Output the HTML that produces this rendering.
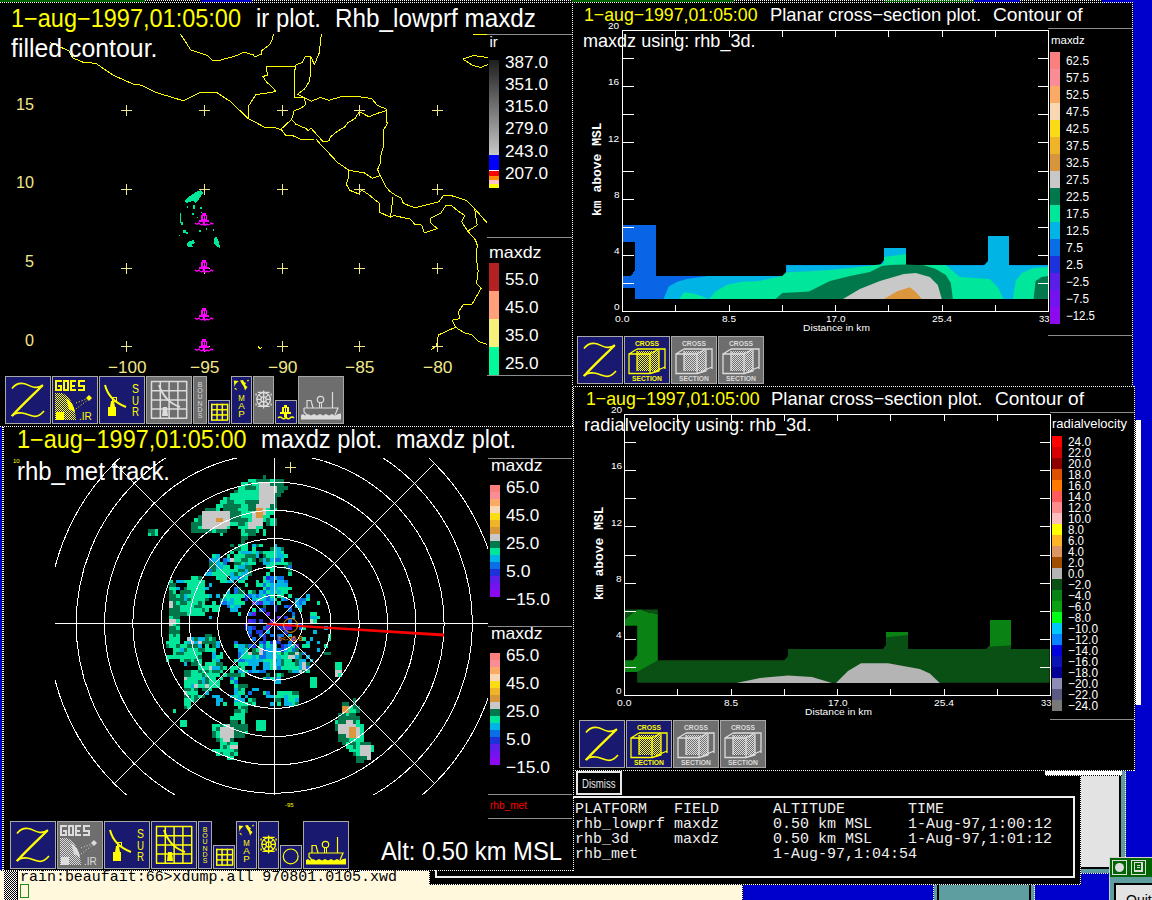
<!DOCTYPE html>
<html><head><meta charset="utf-8"><title>Zeb display</title>
<style>
html,body{margin:0;padding:0}
body{width:1152px;height:900px;overflow:hidden;background:#000;position:relative}
.a{position:absolute}
.t{position:absolute;white-space:pre;line-height:1;transform-origin:0 0}
svg{position:absolute;left:0;top:0;overflow:hidden}
</style></head><body>
<div class="a" style="left:0px;top:0px;width:1152px;height:900px;background:#0000cd;"></div>
<div class="a" style="left:0px;top:870px;width:743px;height:30px;background:#fff8dc;"></div>
<div class="a" style="left:742px;top:885px;width:1px;height:15px;background:repeating-linear-gradient(180deg,#000 0 1px,transparent 1px 2px);"></div>
<div class="a" style="left:4px;top:871px;width:13px;height:29px;background:repeating-conic-gradient(#000 0 25%,#fff 0 50%) 0 0/2px 2px;"></div>
<div class="a" style="left:17px;top:871px;width:1px;height:29px;background:#000;"></div>
<div class="a" style="left:20px;top:884px;width:7px;height:12px;border:1px solid #228b22"></div>
<div class="a" style="left:429px;top:770px;width:652px;height:115px;background:#000;"></div>
<div class="a" style="left:429px;top:870px;width:1px;height:15px;background:repeating-linear-gradient(180deg,#fff 0 1px,transparent 1px 2px);"></div>
<div class="a" style="left:429px;top:884px;width:652px;height:1px;background:repeating-linear-gradient(90deg,#fff 0 1px,transparent 1px 2px);"></div>
<div class="a" style="left:1080px;top:775px;width:1px;height:110px;background:repeating-linear-gradient(180deg,#fff 0 1px,transparent 1px 2px);"></div>
<div class="a" style="left:934px;top:885px;width:101px;height:15px;background:#5f9ea0;"></div>
<div class="a" style="left:933px;top:885px;width:1px;height:15px;background:repeating-linear-gradient(180deg,#fff 0 1px,transparent 1px 2px);"></div>
<div class="a" style="left:937px;top:885px;width:2px;height:15px;background:#000;"></div>
<div class="a" style="left:1029px;top:885px;width:2px;height:15px;background:#000;"></div>
<div class="a" style="left:1034px;top:885px;width:1px;height:15px;background:repeating-linear-gradient(180deg,#fff 0 1px,transparent 1px 2px);"></div>
<div class="a" style="left:1081px;top:775px;width:38px;height:92px;background:#e3e3e3;"></div>
<div class="a" style="left:1119px;top:770px;width:2px;height:99px;background:#000;"></div>
<div class="a" style="left:1081px;top:867px;width:40px;height:2px;background:#000;"></div>
<div class="a" style="left:1121px;top:770px;width:5px;height:103px;background:#5f9ea0;"></div>
<div class="a" style="left:1081px;top:869px;width:45px;height:4px;background:#5f9ea0;"></div>
<div class="a" style="left:1125px;top:770px;width:1px;height:103px;background:repeating-linear-gradient(180deg,#fff 0 1px,transparent 1px 2px);"></div>
<div class="a" style="left:1081px;top:873px;width:45px;height:1px;background:repeating-linear-gradient(90deg,#fff 0 1px,transparent 1px 2px);"></div>
<div class="a" style="left:1045px;top:770px;width:77px;height:6px;background:#fff;"></div>
<div class="a" style="left:1045px;top:775px;width:77px;height:1px;background:repeating-linear-gradient(90deg,#000 0 1px,transparent 1px 2px);"></div>
<div class="a" style="left:1135px;top:420px;width:6px;height:285px;background:#fff;"></div>
<div class="a" style="left:1135px;top:420px;width:1px;height:285px;background:repeating-linear-gradient(180deg,#000 0 1px,transparent 1px 2px);"></div>
<div class="a" style="left:1109px;top:857px;width:43px;height:43px;background:#d0d0d0;"></div>
<div class="a" style="left:1110px;top:858px;width:42px;height:19px;background:#006400;"></div>
<div class="a" style="left:1112px;top:860px;width:13px;height:13px;border:1px solid #ddd"></div>
<div class="a" style="left:1115px;top:863px;width:9px;height:9px;border-radius:50%;background:#ddd"></div>
<div class="a" style="left:1131px;top:860px;width:13px;height:13px;border:1px solid #ddd"></div>
<div class="a" style="left:1134px;top:862px;width:9px;height:10px;background:#ddd;"></div>
<div class="a" style="left:1135px;top:863px;width:6px;height:7px;background:#006400;"></div>
<div class="a" style="left:1137px;top:865px;width:3px;height:1px;background:#ddd;"></div>
<div class="a" style="left:1137px;top:867px;width:3px;height:1px;background:#ddd;"></div>
<div class="a" style="left:1110px;top:877px;width:42px;height:6px;background:#5f9ea0;"></div>
<div class="a" style="left:1110px;top:877px;width:4px;height:23px;background:#5f9ea0;"></div>
<div class="a" style="left:1114px;top:883px;width:38px;height:2px;background:#000;"></div>
<div class="a" style="left:1114px;top:883px;width:2px;height:17px;background:#000;"></div>
<div class="a" style="left:1116px;top:885px;width:36px;height:15px;background:#e3e3e3;"></div>
<div class="t" style="left:1126px;top:893px;font-size:14px;color:#000;font-family:'Liberation Sans';">Quit</div>
<div class="a" style="left:573px;top:386px;width:562px;height:385px;background:#000;"></div>
<div class="a" style="left:572px;top:0px;width:561px;height:387px;background:#000;"></div>
<div class="a" style="left:0px;top:0px;width:573px;height:427px;background:#000;"></div>
<div class="a" style="left:0px;top:426px;width:574px;height:445px;background:#000;"></div>
<div class="a" style="left:0px;top:0px;width:145px;height:2px;background:#006400;"></div>
<div class="a" style="left:145px;top:0px;width:56px;height:1px;background:repeating-linear-gradient(90deg,#fff 0 1px,transparent 1px 2px);"></div>
<div class="a" style="left:201px;top:0px;width:51px;height:2px;background:#0000cd;"></div>
<div class="a" style="left:252px;top:0px;width:320px;height:1px;background:repeating-linear-gradient(90deg,#fff 0 1px,transparent 1px 2px);"></div>
<div class="a" style="left:572px;top:0px;width:162px;height:2px;background:#006400;"></div>
<div class="a" style="left:734px;top:0px;width:150px;height:1px;background:repeating-linear-gradient(90deg,#fff 0 1px,transparent 1px 2px);"></div>
<div class="a" style="left:884px;top:0px;width:90px;height:2px;background:#006400;"></div>
<div class="a" style="left:884px;top:0px;width:90px;height:1px;background:repeating-linear-gradient(90deg,#fff 0 1px,transparent 1px 2px);"></div>
<div class="a" style="left:974px;top:0px;width:46px;height:2px;background:#0000cd;"></div>
<div class="a" style="left:1020px;top:0px;width:82px;height:1px;background:repeating-linear-gradient(90deg,#fff 0 1px,transparent 1px 2px);"></div>
<div class="a" style="left:1102px;top:0px;width:50px;height:3px;background:#0000cd;"></div>
<div class="a" style="left:0px;top:2px;width:1133px;height:1px;background:repeating-linear-gradient(90deg,#fff 0 1px,transparent 1px 2px);"></div>
<div class="a" style="left:572px;top:2px;width:1px;height:384px;background:repeating-linear-gradient(180deg,#fff 0 1px,transparent 1px 2px);"></div>
<div class="a" style="left:1132px;top:2px;width:1px;height:384px;background:repeating-linear-gradient(180deg,#fff 0 1px,transparent 1px 2px);"></div>
<div class="a" style="left:573px;top:386px;width:562px;height:1px;background:repeating-linear-gradient(90deg,#fff 0 1px,transparent 1px 2px);"></div>
<div class="a" style="left:1134px;top:386px;width:1px;height:385px;background:repeating-linear-gradient(180deg,#fff 0 1px,transparent 1px 2px);"></div>
<div class="a" style="left:573px;top:386px;width:1px;height:384px;background:repeating-linear-gradient(180deg,#fff 0 1px,transparent 1px 2px);"></div>
<div class="a" style="left:572px;top:387px;width:1px;height:40px;background:repeating-linear-gradient(180deg,#fff 0 1px,transparent 1px 2px);"></div>
<div class="a" style="left:573px;top:770px;width:562px;height:1px;background:repeating-linear-gradient(90deg,#fff 0 1px,transparent 1px 2px);"></div>
<div class="a" style="left:0px;top:426px;width:574px;height:1px;background:repeating-linear-gradient(90deg,#fff 0 1px,transparent 1px 2px);"></div>
<div class="a" style="left:573px;top:426px;width:1px;height:445px;background:repeating-linear-gradient(180deg,#fff 0 1px,transparent 1px 2px);"></div>
<div class="a" style="left:0px;top:870px;width:574px;height:1px;background:repeating-linear-gradient(90deg,#fff 0 1px,transparent 1px 2px);"></div>
<div class="a" style="left:0px;top:427px;width:2px;height:443px;background:#0000cd;"></div>
<div class="a" style="left:2px;top:427px;width:1px;height:443px;background:repeating-linear-gradient(180deg,#fff 0 1px,transparent 1px 2px);"></div>
<div class="a" style="left:3px;top:427px;width:1px;height:443px;background:repeating-linear-gradient(180deg,#fff 0 1px,transparent 1px 2px);"></div>
<svg width="573" height="426" style="left:0px;top:0px"><defs>
<pattern id="dpffff00" width="2" height="2" patternUnits="userSpaceOnUse"><rect x="0" y="0" width="1" height="1" fill="#ffff00"/><rect x="1" y="1" width="1" height="1" fill="#ffff00"/></pattern>
<pattern id="dpdcdcdc" width="2" height="2" patternUnits="userSpaceOnUse"><rect x="0" y="0" width="1" height="1" fill="#dcdcdc"/><rect x="1" y="1" width="1" height="1" fill="#dcdcdc"/></pattern>
</defs><g fill="none" stroke="#ffff00" stroke-width="1" stroke-linejoin="round" shape-rendering="crispEdges"><polyline points="50.0,42.5 68.8,50.8 72.9,58.1 83.3,62.3 95.8,63.3 112.5,74.8 133.3,84.2 141.7,85.2 156.2,92.5 183.3,100.8 200.0,92.5 216.7,92.5 230.0,101.2 248.2,118.5 264.7,127.3 275.1,127.8 281.2,129.5 285.6,135.3 292.5,135.6 300.3,139.1 316.0,139.0 318.6,142.2 337.6,162.5 348.9,170.3 348.0,179.0 346.3,184.2 349.8,190.3 358.5,193.8 362.0,190.3 368.9,194.7 379.3,203.3 379.3,212.0 390.4,217.3 393.9,215.6 410.4,219.1 414.7,224.3 421.7,225.1 424.3,233.0 437.3,228.6 430.3,222.5 430.3,218.2 440.8,213.0 446.0,205.2 451.2,205.2 458.1,211.2 465.0,215.6 461.6,221.7 467.7,231.2 475.5,239.9 477.2,245.1 476.4,258.1 478.1,270.9 476.6,283.4 481.2,288.1 471.9,304.5 463.3,304.5 458.6,311.6 459.4,318.6 452.3,320.2 455.5,327.2 438.3,335.0 436.7,345.2 431.2,349.8"/><polyline points="180.4,34.0 190.8,50.0 207.5,55.6 212.4,60.4 219.3,60.4 236.7,55.6 244.3,52.1 253.3,54.9 254.7,56.7 261.7,54.2 261.7,50.7 270.0,44.4 272.0,40.3 273.5,34.0"/><polyline points="321.4,34.0 319.3,52.8 314.4,64.6 311.0,57.0 310.5,60.0 309.9,80.3 304.6,89.0 297.7,94.2 304.6,97.7"/><polyline points="311.0,57.0 305.4,56.3 302.0,62.5 296.4,64.6 295.0,66.5"/><polyline points="266.5,66.5 295.1,66.5 294.2,97.7 304.6,97.7"/><polyline points="266.5,66.5 267.3,75.1 263.0,76.5 266.5,82.0 271.7,86.4 276.0,91.6 256.0,94.6 248.2,106.4 248.2,118.5"/><polyline points="304.6,97.7 311.6,101.2 320.3,97.4 329.0,100.3 342.8,96.3 356.7,96.3 371.5,98.6 377.6,105.5 386.2,109.0 387.1,123.8 383.6,129.8 383.6,146.0 381.0,154.7 380.2,163.4 377.6,169.5 380.2,175.6 385.4,186.0 389.7,191.2 397.4,196.5 400.8,197.4 403.4,203.4 414.7,207.8 439.0,201.7 443.4,195.6 451.2,195.6 459.9,198.2 466.8,200.8 474.6,208.6 486.8,222.5"/><polyline points="304.6,97.7 305.5,104.7 301.2,108.1 294.2,110.7 291.6,119.4 280.3,129.8"/><polyline points="291.6,119.4 296.0,124.3 306.4,128.7 308.1,130.8 311.2,128.3 318.5,136.5 322.9,141.7 329.0,140.8 330.7,136.5 337.6,131.3 344.6,126.9 348.0,122.6 355.0,118.5 359.3,111.6 368.9,116.8 377.6,113.3 386.2,110.7"/><polyline points="348.9,170.3 364.5,173.0 372.4,178.2 380.2,175.6"/><polyline points="393.0,197.4 390.4,217.3"/><polyline points="467.7,231.2 477.2,225.1 474.6,208.6"/><polyline points="455.5,327.2 464.1,332.7 471.9,334.7 478.1,341.2 486.7,344.4"/><polyline points="463.0,59.2 473.0,55.5 488.0,57.5"/><polyline points="463.0,59.2 473.0,65.5 480.5,67.5 488.0,64.5"/><polyline points="473.0,34.5 488.0,34.5"/><polyline points="258.0,346.0 260.0,349.0 262.0,347.0"/></g><g stroke="#f0e68c" stroke-width="1" shape-rendering="crispEdges"><line x1="121" y1="110.5" x2="132" y2="110.5"/><line x1="126.5" y1="105" x2="126.5" y2="116"/><line x1="121" y1="189.5" x2="132" y2="189.5"/><line x1="126.5" y1="184" x2="126.5" y2="195"/><line x1="121" y1="268.5" x2="132" y2="268.5"/><line x1="126.5" y1="263" x2="126.5" y2="274"/><line x1="121" y1="346.5" x2="132" y2="346.5"/><line x1="126.5" y1="341" x2="126.5" y2="352"/><line x1="199" y1="110.5" x2="210" y2="110.5"/><line x1="204.5" y1="105" x2="204.5" y2="116"/><line x1="199" y1="189.5" x2="210" y2="189.5"/><line x1="204.5" y1="184" x2="204.5" y2="195"/><line x1="199" y1="268.5" x2="210" y2="268.5"/><line x1="204.5" y1="263" x2="204.5" y2="274"/><line x1="199" y1="346.5" x2="210" y2="346.5"/><line x1="204.5" y1="341" x2="204.5" y2="352"/><line x1="277" y1="110.5" x2="288" y2="110.5"/><line x1="282.5" y1="105" x2="282.5" y2="116"/><line x1="277" y1="189.5" x2="288" y2="189.5"/><line x1="282.5" y1="184" x2="282.5" y2="195"/><line x1="277" y1="268.5" x2="288" y2="268.5"/><line x1="282.5" y1="263" x2="282.5" y2="274"/><line x1="277" y1="346.5" x2="288" y2="346.5"/><line x1="282.5" y1="341" x2="282.5" y2="352"/><line x1="354" y1="110.5" x2="365" y2="110.5"/><line x1="359.5" y1="105" x2="359.5" y2="116"/><line x1="354" y1="189.5" x2="365" y2="189.5"/><line x1="359.5" y1="184" x2="359.5" y2="195"/><line x1="354" y1="268.5" x2="365" y2="268.5"/><line x1="359.5" y1="263" x2="359.5" y2="274"/><line x1="354" y1="346.5" x2="365" y2="346.5"/><line x1="359.5" y1="341" x2="359.5" y2="352"/><line x1="432" y1="110.5" x2="443" y2="110.5"/><line x1="437.5" y1="105" x2="437.5" y2="116"/><line x1="432" y1="189.5" x2="443" y2="189.5"/><line x1="437.5" y1="184" x2="437.5" y2="195"/><line x1="432" y1="268.5" x2="443" y2="268.5"/><line x1="437.5" y1="263" x2="437.5" y2="274"/><line x1="432" y1="346.5" x2="443" y2="346.5"/><line x1="437.5" y1="341" x2="437.5" y2="352"/></g><g fill="#00e69b" shape-rendering="crispEdges"><path d="M184,201 L190,196 L196,192 L201,190 L203,193 L199,199 L195,203 L193,201 L186,203 Z"/><path d="M189,241 L194,240 L195,243 L191,245 L194,247 L188,247 L187,244 Z"/><path d="M214,238 L216,236 L219,242 L220,248 L217,247 L214,243 Z"/><rect x="180" y="213" width="1" height="10"/><rect x="181" y="222" width="2" height="3"/><rect x="187" y="206" width="1" height="2"/><rect x="193" y="205" width="2" height="4"/><rect x="200" y="207" width="2" height="2"/><rect x="192" y="213" width="2" height="2"/><rect x="183" y="230" width="3" height="3"/><rect x="186" y="232" width="2" height="2"/><rect x="199" y="230" width="2" height="2"/><rect x="206" y="228" width="1" height="2"/><rect x="213" y="229" width="1" height="2"/><rect x="179" y="235" width="1" height="1"/><rect x="197" y="217" width="1" height="1"/><rect x="201" y="212" width="1" height="1"/></g><g transform="translate(196,213)" fill="#ff00ff" shape-rendering="crispEdges"><rect x="6" y="0" width="4" height="2"/><rect x="5" y="2" width="6" height="5"/><rect x="7" y="3" width="1" height="3" fill="#000"/><rect x="9" y="3" width="1" height="3" fill="#000"/><rect x="3" y="7" width="10" height="2"/><rect x="7" y="9" width="2" height="3"/></g><path transform="translate(196,213)" d="M-1,10 Q1,12 3,10 Q5,13 7,11 Q9,13 11,11 Q13,13 15,10 Q17,12 17,10" fill="none" stroke="#ff00ff" stroke-width="1.2"/><g transform="translate(196,260)" fill="#ff00ff" shape-rendering="crispEdges"><rect x="6" y="0" width="4" height="2"/><rect x="5" y="2" width="6" height="5"/><rect x="7" y="3" width="1" height="3" fill="#000"/><rect x="9" y="3" width="1" height="3" fill="#000"/><rect x="3" y="7" width="10" height="2"/><rect x="7" y="9" width="2" height="3"/></g><path transform="translate(196,260)" d="M-1,10 Q1,12 3,10 Q5,13 7,11 Q9,13 11,11 Q13,13 15,10 Q17,12 17,10" fill="none" stroke="#ff00ff" stroke-width="1.2"/><g transform="translate(196,308)" fill="#ff00ff" shape-rendering="crispEdges"><rect x="6" y="0" width="4" height="2"/><rect x="5" y="2" width="6" height="5"/><rect x="7" y="3" width="1" height="3" fill="#000"/><rect x="9" y="3" width="1" height="3" fill="#000"/><rect x="3" y="7" width="10" height="2"/><rect x="7" y="9" width="2" height="3"/></g><path transform="translate(196,308)" d="M-1,10 Q1,12 3,10 Q5,13 7,11 Q9,13 11,11 Q13,13 15,10 Q17,12 17,10" fill="none" stroke="#ff00ff" stroke-width="1.2"/><g transform="translate(196,339)" fill="#ff00ff" shape-rendering="crispEdges"><rect x="6" y="0" width="4" height="2"/><rect x="5" y="2" width="6" height="5"/><rect x="7" y="3" width="1" height="3" fill="#000"/><rect x="9" y="3" width="1" height="3" fill="#000"/><rect x="3" y="7" width="10" height="2"/><rect x="7" y="9" width="2" height="3"/></g><path transform="translate(196,339)" d="M-1,10 Q1,12 3,10 Q5,13 7,11 Q9,13 11,11 Q13,13 15,10 Q17,12 17,10" fill="none" stroke="#ff00ff" stroke-width="1.2"/><g shape-rendering="crispEdges"><rect x="487" y="34" width="85" height="1" fill="#8c8c8c"/><linearGradient id="irg" x1="0" y1="0" x2="0" y2="1"><stop offset="0" stop-color="#1e1e1e"/><stop offset="1" stop-color="#c8c8c8"/></linearGradient><rect x="489" y="60" width="10" height="95" fill="url(#irg)"/><rect x="489" y="155" width="10" height="16" fill="#0000ff"/><rect x="489" y="170" width="10" height="1" fill="#ffffff"/><rect x="489" y="171" width="10" height="5" fill="#ff0000"/><rect x="489" y="176" width="10" height="4" fill="#ff8c00"/><rect x="489" y="180" width="10" height="4" fill="#ffc0cb"/><rect x="489" y="184" width="10" height="4" fill="#ffff00"/><rect x="487" y="237" width="85" height="1" fill="#8c8c8c"/><rect x="489" y="263" width="10" height="28" fill="#b22222"/><rect x="489" y="291" width="10" height="28" fill="#ffa07a"/><rect x="489" y="319" width="10" height="28" fill="#f5f07a"/><rect x="489" y="347" width="10" height="28" fill="#00fa9a"/><rect x="487" y="375" width="85" height="1" fill="#8c8c8c"/></g><rect x="5.5" y="376.5" width="45" height="47" fill="#191970" stroke="#a8a8a8" stroke-width="1"/><g transform="translate(5,376)" fill="none" stroke="#ffff00"><path d="M7,12.5 C10,8.5 14,7 18,7.5 C22,8 25,10.5 29,11.2 C33,12 36,10.5 38,9" stroke-width="1.6"/><path d="M37.5,9.5 C30,17 18,28 7,40" stroke-width="2.3"/><path d="M6.5,40 C9,37.5 13,36.5 17,37 C21,37.5 25,39.5 29,40.2 C33,41 36,38.5 39,35" stroke-width="1.6"/></g><rect x="52.5" y="376.5" width="45" height="47" fill="#191970" stroke="#a8a8a8" stroke-width="1"/><g transform="translate(52,376)" fill="none" stroke="#ffff00"><g fill="#ffff00" stroke="none" shape-rendering="crispEdges"><rect x="3" y="4" width="7" height="2"/><rect x="3" y="4" width="2" height="11"/><rect x="3" y="13" width="7" height="2"/><rect x="8" y="9" width="2" height="6"/><rect x="6" y="9" width="4" height="2"/><rect x="11" y="4" width="6" height="2"/><rect x="11" y="4" width="2" height="11"/><rect x="11" y="13" width="6" height="2"/><rect x="15" y="4" width="2" height="11"/><rect x="18" y="4" width="6" height="2"/><rect x="18" y="4" width="2" height="11"/><rect x="18" y="8.5" width="5" height="2"/><rect x="18" y="13" width="6" height="2"/><rect x="26" y="4" width="7" height="2"/><rect x="26" y="4" width="2" height="6"/><rect x="26" y="8.5" width="7" height="2"/><rect x="31" y="8.5" width="2" height="6.5"/><rect x="26" y="13" width="7" height="2"/></g><path d="M3,17 L10,17 C18,20 23,30 24,44 L3,44 Z" fill="url(#dpffff00)" stroke="none"/><path d="M14,22 C19,25 22,30 23,36 L17,33 Z" fill="#ffff00" stroke="none"/><rect x="4" y="36" width="8" height="8" fill="#ffff00" stroke="none"/><path d="M24,27 L37,22 M24,33 L37,23" stroke-width="1" stroke-dasharray="1 2"/><path d="M37,19 L40,22 L37,25 L34,22 Z" fill="#ffff00" stroke="none"/><text x="27" y="44" font-family="Liberation Sans" font-size="10" fill="#ffff00" stroke="none">.IR</text></g><rect x="99.5" y="376.5" width="45" height="47" fill="#191970" stroke="#a8a8a8" stroke-width="1"/><g transform="translate(99,376)" fill="none" stroke="#ffff00"><path d="M6,9 C8,17 14,26 27,31" stroke-width="2"/><rect x="13.5" y="21.5" width="4" height="4" stroke-width="1"/><path d="M12,25 L15,25 L16,31 L11,31 Z" fill="#ffff00" stroke="none"/><rect x="9" y="31" width="8" height="9" fill="#ffff00" stroke="none"/><text x="33" y="17" font-family="Liberation Sans" font-size="13" fill="#ffff00" stroke="none" textLength="7" lengthAdjust="spacingAndGlyphs">S</text><text x="33" y="28.5" font-family="Liberation Sans" font-size="13" fill="#ffff00" stroke="none" textLength="7" lengthAdjust="spacingAndGlyphs">U</text><text x="33" y="40" font-family="Liberation Sans" font-size="13" fill="#ffff00" stroke="none" textLength="7" lengthAdjust="spacingAndGlyphs">R</text></g><rect x="146.5" y="376.5" width="45" height="47" fill="#6e6e6e" stroke="#a8a8a8" stroke-width="1"/><g transform="translate(146,376)" fill="none" stroke="#dcdcdc"><g stroke-width="1.5"><line x1="5.5" y1="5" x2="5.5" y2="42.5"/><line x1="5" y1="5.5" x2="41" y2="5.5"/><line x1="14.3" y1="5" x2="14.3" y2="42.5"/><line x1="5" y1="14.7" x2="41" y2="14.7"/><line x1="23.1" y1="5" x2="23.1" y2="42.5"/><line x1="5" y1="23.9" x2="41" y2="23.9"/><line x1="31.900000000000002" y1="5" x2="31.900000000000002" y2="42.5"/><line x1="5" y1="33.099999999999994" x2="41" y2="33.099999999999994"/><line x1="40.7" y1="5" x2="40.7" y2="42.5"/><line x1="5" y1="42.3" x2="41" y2="42.3"/></g><path d="M13,9 C16,18 22,27 34,31" stroke-width="2"/><path d="M17,31 L21,31 L22,40 L16,40 Z" fill="#dcdcdc" stroke="none"/></g><rect x="193.5" y="376.5" width="13" height="47" fill="#6e6e6e" stroke="#a8a8a8" stroke-width="1"/><g transform="translate(193,376)" fill="none" stroke="#dcdcdc"><text x="7.0" y="11.0" text-anchor="middle" font-family="Liberation Sans" font-size="7" fill="#dcdcdc" stroke="none">B</text><text x="7.0" y="17.2" text-anchor="middle" font-family="Liberation Sans" font-size="7" fill="#dcdcdc" stroke="none">O</text><text x="7.0" y="23.4" text-anchor="middle" font-family="Liberation Sans" font-size="7" fill="#dcdcdc" stroke="none">U</text><text x="7.0" y="29.6" text-anchor="middle" font-family="Liberation Sans" font-size="7" fill="#dcdcdc" stroke="none">N</text><text x="7.0" y="35.8" text-anchor="middle" font-family="Liberation Sans" font-size="7" fill="#dcdcdc" stroke="none">D</text><text x="7.0" y="42.0" text-anchor="middle" font-family="Liberation Sans" font-size="7" fill="#dcdcdc" stroke="none">S</text></g><rect x="208.5" y="400.5" width="21" height="23" fill="#191970" stroke="#a8a8a8" stroke-width="1"/><g transform="translate(208,400)" fill="none" stroke="#ffff00"><g stroke-width="1.5"><line x1="3.75" y1="3.75" x2="3.75" y2="20.25"/><line x1="3" y1="4.5" x2="20" y2="4.5"/><line x1="9.05" y1="3.75" x2="9.05" y2="20.25"/><line x1="3" y1="9.7" x2="20" y2="9.7"/><line x1="14.35" y1="3.75" x2="14.35" y2="20.25"/><line x1="3" y1="14.9" x2="20" y2="14.9"/><line x1="19.65" y1="3.75" x2="19.65" y2="20.25"/><line x1="3" y1="20.1" x2="20" y2="20.1"/></g></g><rect x="231.5" y="376.5" width="20" height="47" fill="#191970" stroke="#a8a8a8" stroke-width="1"/><g transform="translate(231,376)" fill="none" stroke="#ffff00"><path d="M2.8,4.5 L7.7,5 L4.5,8 L3.5,11 Z M9,4.5 L12,4 L13,6 L15,7 L14,9 L16.5,11 L15,13 L14,14.6 L13,11 L11,8 Z M16,4 L18,3.8 L17,6 Z M3,12.5 L5,12 L6,14.5 Z" fill="#ffff00" stroke="none"/><text x="10.5" y="25" text-anchor="middle" font-family="Liberation Sans" font-size="9.5" fill="#ffff00" stroke="none" textLength="6.5" lengthAdjust="spacingAndGlyphs">M</text><text x="10.5" y="33" text-anchor="middle" font-family="Liberation Sans" font-size="9.5" fill="#ffff00" stroke="none" textLength="6.5" lengthAdjust="spacingAndGlyphs">A</text><text x="10.5" y="41" text-anchor="middle" font-family="Liberation Sans" font-size="9.5" fill="#ffff00" stroke="none" textLength="6.5" lengthAdjust="spacingAndGlyphs">P</text></g><rect x="253.5" y="376.5" width="20" height="47" fill="#6e6e6e" stroke="#a8a8a8" stroke-width="1"/><g transform="translate(253,376)" fill="none" stroke="#dcdcdc"><circle cx="10.6" cy="23.4" r="6.8" stroke-width="1.3"/><circle cx="10.6" cy="23.4" r="2.6" stroke-width="1.3"/><path d="M13.20,23.40 L17.40,23.40 M12.44,25.24 L15.41,28.21 M10.60,26.00 L10.60,30.20 M8.76,25.24 L5.79,28.21 M8.00,23.40 L3.80,23.40 M8.76,21.56 L5.79,18.59 M10.60,20.80 L10.60,16.60 M12.44,21.56 L15.41,18.59" stroke-width="1.2"/><path d="M10.6,14.399999999999999 L10.6,32.4 M4.6,16.4 L16.6,16.4 M4.6,30.4 L16.6,30.4 M3.0999999999999996,17.4 L3.0999999999999996,19.4 M18.1,17.4 L18.1,19.4 M3.0999999999999996,27.4 L3.0999999999999996,29.4 M18.1,27.4 L18.1,29.4" stroke-width="1.3"/></g><rect x="275.5" y="400.5" width="21" height="23" fill="#191970" stroke="#a8a8a8" stroke-width="1"/><g transform="translate(275,400)" fill="none" stroke="#ffff00"><path d="M9,5 L12,5 L12,7 L14,7 L14,12 L16,12 L16,14 L5,14 L5,12 L7,12 L7,7 L9,7 Z" fill="#ffff00" stroke="none"/><path d="M9.5,8 L9.5,12 M11.5,8 L11.5,12" stroke="#191970" stroke-width="1"/><path d="M3,18 Q5,16 7,18 Q9,20 11,17 Q13,20 15,18 Q17,16 19,18" stroke-width="1.5"/><rect x="9" y="14" width="3" height="3" fill="#ffff00" stroke="none"/></g><rect x="298.5" y="376.5" width="45" height="47" fill="#6e6e6e" stroke="#a8a8a8" stroke-width="1"/><g transform="translate(298,376)" fill="none" stroke="#dcdcdc"><path d="M6,32 L40,32 L37,39 M6,32 L6,36 L9,39" stroke-width="1.2"/><path d="M9,32 L9,24.5 L13,24.5 L15,32" stroke-width="1.2"/><circle cx="22.5" cy="23.5" r="3.2" stroke-width="1.2"/><path d="M21.5,27 L21.5,32 M23.5,27 L23.5,32" stroke-width="1"/><path d="M34.5,16 L34.5,32" stroke-width="1.2"/><path d="M3,39 L5,38 L7,39.5 L10,38 L13,39.5 L16,38 L19,39.5 L22,38 L25,39.5 L28,38 L31,39.5 L34,38 L37,39.5 L40,38 L43,37.5 L43,43.5 L3,43.5 Z" fill="#dcdcdc" stroke="none"/></g></svg>
<div class="t" style="left:11px;top:6px;font-size:25px;color:#ffff00;font-family:'Liberation Sans';transform:scaleX(0.9399);">1−aug−1997,01:05:00</div>
<div class="t" style="left:255.5px;top:6px;font-size:25px;color:#fff;font-family:'Liberation Sans';transform:scaleX(0.9546);">ir plot.</div>
<div class="t" style="left:335px;top:6px;font-size:25px;color:#fff;font-family:'Liberation Sans';transform:scaleX(0.9709);">Rhb_lowprf maxdz</div>
<div class="t" style="left:11px;top:36px;font-size:25px;color:#fff;font-family:'Liberation Sans';transform:scaleX(0.9944);">filled contour.</div>
<div class="t" style="left:489.5px;top:33.5px;font-size:15px;color:#fff;font-family:'Liberation Sans';">ir</div>
<div class="t" style="left:505px;top:53.5px;font-size:16.5px;color:#fff;font-family:'Liberation Sans';transform:scaleX(1.0412);">387.0</div>
<div class="t" style="left:505px;top:75.8px;font-size:16.5px;color:#fff;font-family:'Liberation Sans';transform:scaleX(1.0412);">351.0</div>
<div class="t" style="left:505px;top:98.1px;font-size:16.5px;color:#fff;font-family:'Liberation Sans';transform:scaleX(1.0412);">315.0</div>
<div class="t" style="left:505px;top:120.4px;font-size:16.5px;color:#fff;font-family:'Liberation Sans';transform:scaleX(1.0412);">279.0</div>
<div class="t" style="left:505px;top:142.7px;font-size:16.5px;color:#fff;font-family:'Liberation Sans';transform:scaleX(1.0412);">243.0</div>
<div class="t" style="left:505px;top:165.0px;font-size:16.5px;color:#fff;font-family:'Liberation Sans';transform:scaleX(1.0412);">207.0</div>
<div class="t" style="left:489px;top:243.5px;font-size:17px;color:#fff;font-family:'Liberation Sans';transform:scaleX(1.0484);">maxdz</div>
<div class="t" style="left:504.5px;top:270.5px;font-size:17px;color:#fff;font-family:'Liberation Sans';transform:scaleX(1.0123);">55.0</div>
<div class="t" style="left:504.5px;top:298.5px;font-size:17px;color:#fff;font-family:'Liberation Sans';transform:scaleX(1.0123);">45.0</div>
<div class="t" style="left:504.5px;top:326.5px;font-size:17px;color:#fff;font-family:'Liberation Sans';transform:scaleX(1.0123);">35.0</div>
<div class="t" style="left:504.5px;top:354.5px;font-size:17px;color:#fff;font-family:'Liberation Sans';transform:scaleX(1.0123);">25.0</div>
<div class="t" style="left:15.5px;top:95.6px;font-size:17px;color:#f0e68c;font-family:'Liberation Sans';transform:scaleX(0.9513);">15</div>
<div class="t" style="left:15.5px;top:174.4px;font-size:17px;color:#f0e68c;font-family:'Liberation Sans';transform:scaleX(0.9513);">10</div>
<div class="t" style="left:24.5px;top:252.60000000000002px;font-size:17px;color:#f0e68c;font-family:'Liberation Sans';transform:scaleX(0.9505);">5</div>
<div class="t" style="left:24.5px;top:331.6px;font-size:17px;color:#f0e68c;font-family:'Liberation Sans';transform:scaleX(0.9505);">0</div>
<div class="t" style="left:107.5px;top:358.5px;font-size:17px;color:#f0e68c;font-family:'Liberation Sans';transform:scaleX(1.0053);">−100</div>
<div class="t" style="left:190px;top:358.5px;font-size:17px;color:#f0e68c;font-family:'Liberation Sans';transform:scaleX(1.0228);">−95</div>
<div class="t" style="left:267.5px;top:358.5px;font-size:17px;color:#f0e68c;font-family:'Liberation Sans';transform:scaleX(1.0228);">−90</div>
<div class="t" style="left:345px;top:358.5px;font-size:17px;color:#f0e68c;font-family:'Liberation Sans';transform:scaleX(1.0228);">−85</div>
<div class="t" style="left:423px;top:358.5px;font-size:17px;color:#f0e68c;font-family:'Liberation Sans';transform:scaleX(1.0228);">−80</div>
<svg width="559" height="383" viewBox="573 3 559 383" style="left:573px;top:3px"><g shape-rendering="crispEdges"><path fill="#0a64e6" d="M623,225 L656,225 L656,276 L782.3,276 L786.2,272 L786.2,265.2 L1048,265.2 L1048,299 L635,299 L635,288 L623,288 L623,276 L631,276 L635,270 L635,241.7 L623,241.7 Z"/></g><polygon fill="#00b4e6" points="663.5,299.0 668.7,286.6 677.3,281.8 686.8,279.0 707.9,276.1 782.3,276.1 786.2,272.3 786.2,265.2 880.0,265.2 884.0,260.0 884.0,248.0 906.0,248.0 906.0,265.2 984.0,265.2 988.0,261.0 988.0,236.0 1009.0,236.0 1009.0,265.2 1048.0,265.2 1048.0,299.0"/><polygon fill="#00e69b" points="679.2,299.0 684.0,292.3 692.6,293.3 702.1,296.2 707.9,299.0"/><polygon fill="#00e69b" points="708.8,299.0 715.5,291.4 727.0,284.7 742.2,281.8 759.4,280.9 782.3,276.1 786.2,272.3 811.0,271.3 830.0,269.9 850.0,268.0 866.0,266.0 884.0,264.0 884.0,257.0 906.0,254.0 906.0,265.0 945.8,264.9 959.8,276.9 989.7,278.9 997.7,286.9 1003.7,299.0"/><polygon fill="#00e69b" points="1012.7,299.0 1015.7,280.9 1021.7,272.9 1033.6,267.9 1048.0,266.9 1048.0,299.0"/><polygon fill="#00784b" points="775.6,299.0 782.3,292.9 809.1,291.4 822.4,284.7 830.0,280.9 850.0,275.9 869.9,271.9 881.9,265.9 889.9,264.9 905.9,264.5 923.8,265.3 935.8,268.9 945.8,274.9 950.8,282.9 952.8,299.0"/><polygon fill="#c8c8c8" points="843.0,299.0 859.9,288.9 879.9,280.9 903.9,273.9 915.8,272.9 929.8,276.9 937.8,284.9 941.8,299.0"/><polygon fill="#dc963c" points="883.9,299.0 897.9,290.9 909.9,287.3 915.8,291.9 921.8,299.0"/><polygon fill="#00784b" points="1033.6,299.0 1035.6,280.9 1041.6,276.9 1048.0,275.9 1048.0,299.0"/><g stroke="#fff" stroke-width="1" fill="none" shape-rendering="crispEdges"><path d="M622.5,30.5 L1048.5,30.5 L1048.5,311.5 L622.5,311.5 Z"/><line x1="675.5" y1="30.5" x2="675.5" y2="36.5"/><line x1="675.5" y1="311.5" x2="675.5" y2="304.5"/><line x1="729.5" y1="30.5" x2="729.5" y2="36.5"/><line x1="729.5" y1="311.5" x2="729.5" y2="304.5"/><line x1="782.5" y1="30.5" x2="782.5" y2="36.5"/><line x1="782.5" y1="311.5" x2="782.5" y2="304.5"/><line x1="835.5" y1="30.5" x2="835.5" y2="36.5"/><line x1="835.5" y1="311.5" x2="835.5" y2="304.5"/><line x1="888.5" y1="30.5" x2="888.5" y2="36.5"/><line x1="888.5" y1="311.5" x2="888.5" y2="304.5"/><line x1="942.5" y1="30.5" x2="942.5" y2="36.5"/><line x1="942.5" y1="311.5" x2="942.5" y2="304.5"/><line x1="995.5" y1="30.5" x2="995.5" y2="36.5"/><line x1="995.5" y1="311.5" x2="995.5" y2="304.5"/><line x1="622.5" y1="283.5" x2="633.5" y2="283.5"/><line x1="1048.5" y1="283.5" x2="1037.5" y2="283.5"/><line x1="622.5" y1="255.5" x2="633.5" y2="255.5"/><line x1="1048.5" y1="255.5" x2="1037.5" y2="255.5"/><line x1="622.5" y1="227.5" x2="633.5" y2="227.5"/><line x1="1048.5" y1="227.5" x2="1037.5" y2="227.5"/><line x1="622.5" y1="199.5" x2="633.5" y2="199.5"/><line x1="1048.5" y1="199.5" x2="1037.5" y2="199.5"/><line x1="622.5" y1="171.5" x2="633.5" y2="171.5"/><line x1="1048.5" y1="171.5" x2="1037.5" y2="171.5"/><line x1="622.5" y1="142.5" x2="633.5" y2="142.5"/><line x1="1048.5" y1="142.5" x2="1037.5" y2="142.5"/><line x1="622.5" y1="114.5" x2="633.5" y2="114.5"/><line x1="1048.5" y1="114.5" x2="1037.5" y2="114.5"/><line x1="622.5" y1="86.5" x2="633.5" y2="86.5"/><line x1="1048.5" y1="86.5" x2="1037.5" y2="86.5"/><line x1="622.5" y1="58.5" x2="633.5" y2="58.5"/><line x1="1048.5" y1="58.5" x2="1037.5" y2="58.5"/></g><g shape-rendering="crispEdges"><rect x="1048" y="28" width="84" height="1" fill="#8c8c8c"/><rect x="1048" y="335" width="84" height="1" fill="#8c8c8c"/><rect x="1050" y="52" width="10" height="17" fill="#fa8080"/><rect x="1050" y="69" width="10" height="17" fill="#fa8c96"/><rect x="1050" y="86" width="10" height="17" fill="#faaa64"/><rect x="1050" y="103" width="10" height="17" fill="#fad7b4"/><rect x="1050" y="120" width="10" height="17" fill="#fadc14"/><rect x="1050" y="137" width="10" height="17" fill="#f0b428"/><rect x="1050" y="154" width="10" height="17" fill="#d7963c"/><rect x="1050" y="171" width="10" height="17" fill="#c8c8c8"/><rect x="1050" y="188" width="10" height="17" fill="#00784b"/><rect x="1050" y="205" width="10" height="17" fill="#00e69b"/><rect x="1050" y="222" width="10" height="17" fill="#00b4e6"/><rect x="1050" y="239" width="10" height="17" fill="#0a6ee6"/><rect x="1050" y="256" width="10" height="17" fill="#1e32dc"/><rect x="1050" y="273" width="10" height="17" fill="#5a1ee6"/><rect x="1050" y="290" width="10" height="17" fill="#7314f0"/><rect x="1050" y="307" width="10" height="17" fill="#8c0af0"/></g><rect x="577.5" y="336.5" width="45" height="47" fill="#191970" stroke="#a8a8a8" stroke-width="1"/><g transform="translate(577,336)" fill="none" stroke="#ffff00"><path d="M7,12.5 C10,8.5 14,7 18,7.5 C22,8 25,10.5 29,11.2 C33,12 36,10.5 38,9" stroke-width="1.6"/><path d="M37.5,9.5 C30,17 18,28 7,40" stroke-width="2.3"/><path d="M6.5,40 C9,37.5 13,36.5 17,37 C21,37.5 25,39.5 29,40.2 C33,41 36,38.5 39,35" stroke-width="1.6"/></g><rect x="624.5" y="336.5" width="45" height="47" fill="#191970" stroke="#a8a8a8" stroke-width="1"/><g transform="translate(624,336)" fill="none" stroke="#ffff00"><text x="23" y="9.5" text-anchor="middle" font-family="Liberation Sans" font-weight="700" font-size="7" fill="#ffff00" stroke="none" textLength="24" lengthAdjust="spacingAndGlyphs">CROSS</text><text x="23" y="44.5" text-anchor="middle" font-family="Liberation Sans" font-weight="700" font-size="7" fill="#ffff00" stroke="none" textLength="30" lengthAdjust="spacingAndGlyphs">SECTION</text><rect x="13" y="15" width="22" height="20" fill="url(#dpffff00)" stroke="none"/><path d="M5,18 L26,18 L26,37.5 L5,37.5 Z M13,13 L41,13 L41,33 M5,18 L13,13 M26,18 L35,13 M26,37.5 L41,31 M35,14 L35,35 L26,37.5 M13,15 L13,35" stroke-width="1.3"/></g><rect x="671.5" y="336.5" width="45" height="47" fill="#6e6e6e" stroke="#a8a8a8" stroke-width="1"/><g transform="translate(671,336)" fill="none" stroke="#dcdcdc"><text x="23" y="9.5" text-anchor="middle" font-family="Liberation Sans" font-weight="700" font-size="7" fill="#dcdcdc" stroke="none" textLength="24" lengthAdjust="spacingAndGlyphs">CROSS</text><text x="23" y="44.5" text-anchor="middle" font-family="Liberation Sans" font-weight="700" font-size="7" fill="#dcdcdc" stroke="none" textLength="30" lengthAdjust="spacingAndGlyphs">SECTION</text><rect x="13" y="15" width="22" height="20" fill="url(#dpdcdcdc)" stroke="none"/><path d="M5,18 L26,18 L26,37.5 L5,37.5 Z M13,13 L41,13 L41,33 M5,18 L13,13 M26,18 L35,13 M26,37.5 L41,31 M35,14 L35,35 L26,37.5 M13,15 L13,35" stroke-width="1.3"/></g><rect x="718.5" y="336.5" width="45" height="47" fill="#6e6e6e" stroke="#a8a8a8" stroke-width="1"/><g transform="translate(718,336)" fill="none" stroke="#dcdcdc"><text x="23" y="9.5" text-anchor="middle" font-family="Liberation Sans" font-weight="700" font-size="7" fill="#dcdcdc" stroke="none" textLength="24" lengthAdjust="spacingAndGlyphs">CROSS</text><text x="23" y="44.5" text-anchor="middle" font-family="Liberation Sans" font-weight="700" font-size="7" fill="#dcdcdc" stroke="none" textLength="30" lengthAdjust="spacingAndGlyphs">SECTION</text><rect x="13" y="15" width="22" height="20" fill="url(#dpdcdcdc)" stroke="none"/><path d="M5,18 L26,18 L26,37.5 L5,37.5 Z M13,13 L41,13 L41,33 M5,18 L13,13 M26,18 L35,13 M26,37.5 L41,31 M35,14 L35,35 L26,37.5 M13,15 L13,35" stroke-width="1.3"/></g></svg>
<div class="t" style="left:584px;top:5.5px;font-size:18.5px;color:#ffff00;font-family:'Liberation Sans';transform:scaleX(0.9581);">1−aug−1997,01:05:00</div>
<div class="t" style="left:769.7px;top:5.5px;font-size:18.5px;color:#fff;font-family:'Liberation Sans';transform:scaleX(0.9937);">Planar cross−section plot.</div>
<div class="t" style="left:992.5px;top:5.5px;font-size:18.5px;color:#fff;font-family:'Liberation Sans';transform:scaleX(1.0383);">Contour of</div>
<div class="t" style="left:582.5px;top:32px;font-size:18.5px;color:#fff;font-family:'Liberation Sans';transform:scaleX(0.9752);">maxdz using: rhb_3d.</div>
<div class="t" style="left:1050.7px;top:34.9px;font-size:11.5px;color:#fff;font-family:'Liberation Sans';transform:scaleX(0.9948);">maxdz</div>
<div class="t" style="left:1065.5px;top:55px;font-size:12px;color:#fff;font-family:'Liberation Sans';transform:scaleX(0.9846);">62.5</div>
<div class="t" style="left:1065.5px;top:72px;font-size:12px;color:#fff;font-family:'Liberation Sans';transform:scaleX(0.9846);">57.5</div>
<div class="t" style="left:1065.5px;top:89px;font-size:12px;color:#fff;font-family:'Liberation Sans';transform:scaleX(0.9846);">52.5</div>
<div class="t" style="left:1065.5px;top:106px;font-size:12px;color:#fff;font-family:'Liberation Sans';transform:scaleX(0.9846);">47.5</div>
<div class="t" style="left:1065.5px;top:123px;font-size:12px;color:#fff;font-family:'Liberation Sans';transform:scaleX(0.9846);">42.5</div>
<div class="t" style="left:1065.5px;top:140px;font-size:12px;color:#fff;font-family:'Liberation Sans';transform:scaleX(0.9846);">37.5</div>
<div class="t" style="left:1065.5px;top:157px;font-size:12px;color:#fff;font-family:'Liberation Sans';transform:scaleX(0.9846);">32.5</div>
<div class="t" style="left:1065.5px;top:174px;font-size:12px;color:#fff;font-family:'Liberation Sans';transform:scaleX(0.9846);">27.5</div>
<div class="t" style="left:1065.5px;top:191px;font-size:12px;color:#fff;font-family:'Liberation Sans';transform:scaleX(0.9846);">22.5</div>
<div class="t" style="left:1065.5px;top:208px;font-size:12px;color:#fff;font-family:'Liberation Sans';transform:scaleX(0.9846);">17.5</div>
<div class="t" style="left:1065.5px;top:225px;font-size:12px;color:#fff;font-family:'Liberation Sans';transform:scaleX(0.9846);">12.5</div>
<div class="t" style="left:1065.5px;top:242px;font-size:12px;color:#fff;font-family:'Liberation Sans';transform:scaleX(1.0187);">7.5</div>
<div class="t" style="left:1065.5px;top:259px;font-size:12px;color:#fff;font-family:'Liberation Sans';transform:scaleX(1.0187);">2.5</div>
<div class="t" style="left:1065.5px;top:276px;font-size:12px;color:#fff;font-family:'Liberation Sans';transform:scaleX(0.9703);">−2.5</div>
<div class="t" style="left:1065.5px;top:293px;font-size:12px;color:#fff;font-family:'Liberation Sans';transform:scaleX(0.9703);">−7.5</div>
<div class="t" style="left:1065.5px;top:310px;font-size:12px;color:#fff;font-family:'Liberation Sans';transform:scaleX(0.9547);">−12.5</div>
<div class="t" style="left:608.3px;top:21.2px;font-size:9.5px;color:#fff;font-family:'Liberation Sans';transform:scaleX(1.0588);">20</div>
<div class="t" style="left:608.3px;top:77.4px;font-size:9.5px;color:#fff;font-family:'Liberation Sans';transform:scaleX(1.0588);">16</div>
<div class="t" style="left:608.3px;top:133.6px;font-size:9.5px;color:#fff;font-family:'Liberation Sans';transform:scaleX(1.0588);">12</div>
<div class="t" style="left:613.9px;top:189.8px;font-size:9.5px;color:#fff;font-family:'Liberation Sans';transform:scaleX(1.0572);">8</div>
<div class="t" style="left:613.9px;top:246.0px;font-size:9.5px;color:#fff;font-family:'Liberation Sans';transform:scaleX(1.0572);">4</div>
<div class="t" style="left:613.9px;top:302.2px;font-size:9.5px;color:#fff;font-family:'Liberation Sans';transform:scaleX(1.0572);">0</div>
<div class="t" style="left:614.5px;top:314px;font-size:9.5px;color:#fff;font-family:'Liberation Sans';transform:scaleX(1.0969);">0.0</div>
<div class="t" style="left:721.6px;top:314px;font-size:9.5px;color:#fff;font-family:'Liberation Sans';transform:scaleX(1.0591);">8.5</div>
<div class="t" style="left:825.55px;top:314px;font-size:9.5px;color:#fff;font-family:'Liberation Sans';transform:scaleX(1.0541);">17.0</div>
<div class="t" style="left:932.0px;top:314px;font-size:9.5px;color:#fff;font-family:'Liberation Sans';transform:scaleX(1.0811);">25.4</div>
<div class="t" style="left:1038.75px;top:314px;font-size:9.5px;color:#fff;font-family:'Liberation Sans';transform:scaleX(0.9926);">33</div>
<div class="t" style="left:802.5px;top:324px;font-size:9px;color:#fff;font-family:'Liberation Sans';transform:scaleX(1.1350);">Distance in km</div>
<div class="t" style="left:591px;top:216px;font-family:'Liberation Mono';font-weight:700;font-size:13px;color:#fff;transform:rotate(-90deg);transform-origin:0 0;width:95px;height:14px;line-height:14px">km above MSL</div>
<svg width="560" height="383" viewBox="574 387 560 383" style="left:574px;top:387px"><polygon fill="#0a5014" points="637.2,660.2 784.2,660.2 788.0,656.0 788.0,649.1 883.0,649.0 886.0,645.0 886.0,632.0 908.0,632.0 908.0,649.0 986.0,649.0 990.0,645.0 990.0,620.0 1011.0,620.0 1011.0,649.0 1049.6,649.0 1049.6,682.8 637.2,682.8"/><polygon fill="#0a8214" points="625.0,619.0 637.0,609.5 641.0,609.5 648.6,612.4 657.8,613.8 657.8,660.2 637.2,672.0 625.0,672.0 625.0,660.2 633.0,660.2 637.2,655.0 637.2,625.8 625.0,625.8"/><polygon fill="#0a5014" points="625.0,609.5 637.0,609.5 625.0,619.0"/><polygon fill="#0a5014" points="641.0,609.5 657.8,609.5 657.8,613.8 648.6,612.4"/><polygon fill="#0a8214" points="886.0,632.0 908.0,632.0 908.0,635.0 886.0,637.3"/><polygon fill="#0a8214" points="990.0,620.0 1011.0,620.0 1011.0,645.5 990.0,646.5"/><polygon fill="#b4b4b4" points="736.5,683.0 760.0,678.0 788.0,675.4 812.0,677.0 832.0,683.0"/><polygon fill="#b4b4b4" points="836.0,683.0 848.0,671.0 861.0,663.3 888.0,663.3 919.8,669.0 929.8,673.5 939.8,683.0"/><g stroke="#fff" stroke-width="1" fill="none" shape-rendering="crispEdges"><path d="M624.5,414.5 L1050.5,414.5 L1050.5,695.5 L624.5,695.5 Z"/><line x1="677.5" y1="414.5" x2="677.5" y2="420.5"/><line x1="677.5" y1="695.5" x2="677.5" y2="688.5"/><line x1="731.5" y1="414.5" x2="731.5" y2="420.5"/><line x1="731.5" y1="695.5" x2="731.5" y2="688.5"/><line x1="784.5" y1="414.5" x2="784.5" y2="420.5"/><line x1="784.5" y1="695.5" x2="784.5" y2="688.5"/><line x1="837.5" y1="414.5" x2="837.5" y2="420.5"/><line x1="837.5" y1="695.5" x2="837.5" y2="688.5"/><line x1="890.5" y1="414.5" x2="890.5" y2="420.5"/><line x1="890.5" y1="695.5" x2="890.5" y2="688.5"/><line x1="944.5" y1="414.5" x2="944.5" y2="420.5"/><line x1="944.5" y1="695.5" x2="944.5" y2="688.5"/><line x1="997.5" y1="414.5" x2="997.5" y2="420.5"/><line x1="997.5" y1="695.5" x2="997.5" y2="688.5"/><line x1="624.5" y1="667.5" x2="635.5" y2="667.5"/><line x1="1050.5" y1="667.5" x2="1039.5" y2="667.5"/><line x1="624.5" y1="639.5" x2="635.5" y2="639.5"/><line x1="1050.5" y1="639.5" x2="1039.5" y2="639.5"/><line x1="624.5" y1="611.5" x2="635.5" y2="611.5"/><line x1="1050.5" y1="611.5" x2="1039.5" y2="611.5"/><line x1="624.5" y1="583.5" x2="635.5" y2="583.5"/><line x1="1050.5" y1="583.5" x2="1039.5" y2="583.5"/><line x1="624.5" y1="555.5" x2="635.5" y2="555.5"/><line x1="1050.5" y1="555.5" x2="1039.5" y2="555.5"/><line x1="624.5" y1="526.5" x2="635.5" y2="526.5"/><line x1="1050.5" y1="526.5" x2="1039.5" y2="526.5"/><line x1="624.5" y1="498.5" x2="635.5" y2="498.5"/><line x1="1050.5" y1="498.5" x2="1039.5" y2="498.5"/><line x1="624.5" y1="470.5" x2="635.5" y2="470.5"/><line x1="1050.5" y1="470.5" x2="1039.5" y2="470.5"/><line x1="624.5" y1="442.5" x2="635.5" y2="442.5"/><line x1="1050.5" y1="442.5" x2="1039.5" y2="442.5"/></g><g shape-rendering="crispEdges"><rect x="1050" y="412" width="84" height="1" fill="#8c8c8c"/><rect x="1050" y="719" width="84" height="1" fill="#8c8c8c"/><rect x="1052" y="436" width="10" height="11" fill="#ff0000"/><rect x="1052" y="447" width="10" height="11" fill="#d70000"/><rect x="1052" y="458" width="10" height="11" fill="#8c0000"/><rect x="1052" y="469" width="10" height="11" fill="#dc5000"/><rect x="1052" y="480" width="10" height="11" fill="#ff7800"/><rect x="1052" y="491" width="10" height="11" fill="#ff5a5a"/><rect x="1052" y="502" width="10" height="11" fill="#ff8c8c"/><rect x="1052" y="513" width="10" height="11" fill="#ffbebe"/><rect x="1052" y="524" width="10" height="11" fill="#ffff00"/><rect x="1052" y="535" width="10" height="11" fill="#ffb428"/><rect x="1052" y="546" width="10" height="11" fill="#dc9664"/><rect x="1052" y="557" width="10" height="11" fill="#a05000"/><rect x="1052" y="568" width="10" height="11" fill="#b4b4b4"/><rect x="1052" y="579" width="10" height="11" fill="#0a5014"/><rect x="1052" y="590" width="10" height="11" fill="#0a8214"/><rect x="1052" y="601" width="10" height="11" fill="#0aa014"/><rect x="1052" y="612" width="10" height="11" fill="#00ff14"/><rect x="1052" y="623" width="10" height="11" fill="#00c8ff"/><rect x="1052" y="634" width="10" height="11" fill="#0a82ff"/><rect x="1052" y="645" width="10" height="11" fill="#0000dc"/><rect x="1052" y="656" width="10" height="11" fill="#0a14b4"/><rect x="1052" y="667" width="10" height="11" fill="#000096"/><rect x="1052" y="678" width="10" height="11" fill="#8c8cb4"/><rect x="1052" y="689" width="10" height="11" fill="#5a5a82"/><rect x="1052" y="700" width="10" height="11" fill="#787878"/></g><rect x="579.5" y="720.5" width="45" height="47" fill="#191970" stroke="#a8a8a8" stroke-width="1"/><g transform="translate(579,720)" fill="none" stroke="#ffff00"><path d="M7,12.5 C10,8.5 14,7 18,7.5 C22,8 25,10.5 29,11.2 C33,12 36,10.5 38,9" stroke-width="1.6"/><path d="M37.5,9.5 C30,17 18,28 7,40" stroke-width="2.3"/><path d="M6.5,40 C9,37.5 13,36.5 17,37 C21,37.5 25,39.5 29,40.2 C33,41 36,38.5 39,35" stroke-width="1.6"/></g><rect x="626.5" y="720.5" width="45" height="47" fill="#191970" stroke="#a8a8a8" stroke-width="1"/><g transform="translate(626,720)" fill="none" stroke="#ffff00"><text x="23" y="9.5" text-anchor="middle" font-family="Liberation Sans" font-weight="700" font-size="7" fill="#ffff00" stroke="none" textLength="24" lengthAdjust="spacingAndGlyphs">CROSS</text><text x="23" y="44.5" text-anchor="middle" font-family="Liberation Sans" font-weight="700" font-size="7" fill="#ffff00" stroke="none" textLength="30" lengthAdjust="spacingAndGlyphs">SECTION</text><rect x="13" y="15" width="22" height="20" fill="url(#dpffff00)" stroke="none"/><path d="M5,18 L26,18 L26,37.5 L5,37.5 Z M13,13 L41,13 L41,33 M5,18 L13,13 M26,18 L35,13 M26,37.5 L41,31 M35,14 L35,35 L26,37.5 M13,15 L13,35" stroke-width="1.3"/></g><rect x="673.5" y="720.5" width="45" height="47" fill="#6e6e6e" stroke="#a8a8a8" stroke-width="1"/><g transform="translate(673,720)" fill="none" stroke="#dcdcdc"><text x="23" y="9.5" text-anchor="middle" font-family="Liberation Sans" font-weight="700" font-size="7" fill="#dcdcdc" stroke="none" textLength="24" lengthAdjust="spacingAndGlyphs">CROSS</text><text x="23" y="44.5" text-anchor="middle" font-family="Liberation Sans" font-weight="700" font-size="7" fill="#dcdcdc" stroke="none" textLength="30" lengthAdjust="spacingAndGlyphs">SECTION</text><rect x="13" y="15" width="22" height="20" fill="url(#dpdcdcdc)" stroke="none"/><path d="M5,18 L26,18 L26,37.5 L5,37.5 Z M13,13 L41,13 L41,33 M5,18 L13,13 M26,18 L35,13 M26,37.5 L41,31 M35,14 L35,35 L26,37.5 M13,15 L13,35" stroke-width="1.3"/></g><rect x="720.5" y="720.5" width="45" height="47" fill="#6e6e6e" stroke="#a8a8a8" stroke-width="1"/><g transform="translate(720,720)" fill="none" stroke="#dcdcdc"><text x="23" y="9.5" text-anchor="middle" font-family="Liberation Sans" font-weight="700" font-size="7" fill="#dcdcdc" stroke="none" textLength="24" lengthAdjust="spacingAndGlyphs">CROSS</text><text x="23" y="44.5" text-anchor="middle" font-family="Liberation Sans" font-weight="700" font-size="7" fill="#dcdcdc" stroke="none" textLength="30" lengthAdjust="spacingAndGlyphs">SECTION</text><rect x="13" y="15" width="22" height="20" fill="url(#dpdcdcdc)" stroke="none"/><path d="M5,18 L26,18 L26,37.5 L5,37.5 Z M13,13 L41,13 L41,33 M5,18 L13,13 M26,18 L35,13 M26,37.5 L41,31 M35,14 L35,35 L26,37.5 M13,15 L13,35" stroke-width="1.3"/></g></svg>
<div class="t" style="left:586px;top:389.5px;font-size:18.5px;color:#ffff00;font-family:'Liberation Sans';transform:scaleX(0.9581);">1−aug−1997,01:05:00</div>
<div class="t" style="left:771.3px;top:389.5px;font-size:18.5px;color:#fff;font-family:'Liberation Sans';transform:scaleX(0.9960);">Planar cross−section plot.</div>
<div class="t" style="left:994.7px;top:389.5px;font-size:18.5px;color:#fff;font-family:'Liberation Sans';transform:scaleX(1.0302);">Contour of</div>
<div class="t" style="left:584.3px;top:416.3px;font-size:18.5px;color:#fff;font-family:'Liberation Sans';transform:scaleX(0.9925);">radialvelocity using: rhb_3d.</div>
<div class="t" style="left:1052px;top:417px;font-size:13px;color:#fff;font-family:'Liberation Sans';transform:scaleX(0.9979);">radialvelocity</div>
<div class="t" style="left:1067.7px;top:436px;font-size:12.5px;color:#fff;font-family:'Liberation Sans';transform:scaleX(0.9448);">24.0</div>
<div class="t" style="left:1067.7px;top:447px;font-size:12.5px;color:#fff;font-family:'Liberation Sans';transform:scaleX(0.9448);">22.0</div>
<div class="t" style="left:1067.7px;top:458px;font-size:12.5px;color:#fff;font-family:'Liberation Sans';transform:scaleX(0.9448);">20.0</div>
<div class="t" style="left:1067.7px;top:469px;font-size:12.5px;color:#fff;font-family:'Liberation Sans';transform:scaleX(0.9448);">18.0</div>
<div class="t" style="left:1067.7px;top:480px;font-size:12.5px;color:#fff;font-family:'Liberation Sans';transform:scaleX(0.9448);">16.0</div>
<div class="t" style="left:1067.7px;top:491px;font-size:12.5px;color:#fff;font-family:'Liberation Sans';transform:scaleX(0.9448);">14.0</div>
<div class="t" style="left:1067.7px;top:502px;font-size:12.5px;color:#fff;font-family:'Liberation Sans';transform:scaleX(0.9448);">12.0</div>
<div class="t" style="left:1067.7px;top:513px;font-size:12.5px;color:#fff;font-family:'Liberation Sans';transform:scaleX(0.9448);">10.0</div>
<div class="t" style="left:1067.7px;top:524px;font-size:12.5px;color:#fff;font-family:'Liberation Sans';transform:scaleX(0.9200);">8.0</div>
<div class="t" style="left:1067.7px;top:535px;font-size:12.5px;color:#fff;font-family:'Liberation Sans';transform:scaleX(0.9200);">6.0</div>
<div class="t" style="left:1067.7px;top:546px;font-size:12.5px;color:#fff;font-family:'Liberation Sans';transform:scaleX(0.9200);">4.0</div>
<div class="t" style="left:1067.7px;top:557px;font-size:12.5px;color:#fff;font-family:'Liberation Sans';transform:scaleX(0.9200);">2.0</div>
<div class="t" style="left:1067.7px;top:568px;font-size:12.5px;color:#fff;font-family:'Liberation Sans';transform:scaleX(0.9200);">0.0</div>
<div class="t" style="left:1067.7px;top:579px;font-size:12.5px;color:#fff;font-family:'Liberation Sans';transform:scaleX(0.9316);">−2.0</div>
<div class="t" style="left:1067.7px;top:590px;font-size:12.5px;color:#fff;font-family:'Liberation Sans';transform:scaleX(0.9316);">−4.0</div>
<div class="t" style="left:1067.7px;top:601px;font-size:12.5px;color:#fff;font-family:'Liberation Sans';transform:scaleX(0.9316);">−6.0</div>
<div class="t" style="left:1067.7px;top:612px;font-size:12.5px;color:#fff;font-family:'Liberation Sans';transform:scaleX(0.9316);">−8.0</div>
<div class="t" style="left:1067.7px;top:623px;font-size:12.5px;color:#fff;font-family:'Liberation Sans';transform:scaleX(0.9481);">−10.0</div>
<div class="t" style="left:1067.7px;top:634px;font-size:12.5px;color:#fff;font-family:'Liberation Sans';transform:scaleX(0.9481);">−12.0</div>
<div class="t" style="left:1067.7px;top:645px;font-size:12.5px;color:#fff;font-family:'Liberation Sans';transform:scaleX(0.9481);">−14.0</div>
<div class="t" style="left:1067.7px;top:656px;font-size:12.5px;color:#fff;font-family:'Liberation Sans';transform:scaleX(0.9481);">−16.0</div>
<div class="t" style="left:1067.7px;top:667px;font-size:12.5px;color:#fff;font-family:'Liberation Sans';transform:scaleX(0.9481);">−18.0</div>
<div class="t" style="left:1067.7px;top:678px;font-size:12.5px;color:#fff;font-family:'Liberation Sans';transform:scaleX(0.9481);">−20.0</div>
<div class="t" style="left:1067.7px;top:689px;font-size:12.5px;color:#fff;font-family:'Liberation Sans';transform:scaleX(0.9481);">−22.0</div>
<div class="t" style="left:1067.7px;top:700px;font-size:12.5px;color:#fff;font-family:'Liberation Sans';transform:scaleX(0.9481);">−24.0</div>
<div class="t" style="left:610.5999999999999px;top:405.2px;font-size:9.5px;color:#fff;font-family:'Liberation Sans';transform:scaleX(1.0588);">20</div>
<div class="t" style="left:610.5999999999999px;top:461.4px;font-size:9.5px;color:#fff;font-family:'Liberation Sans';transform:scaleX(1.0588);">16</div>
<div class="t" style="left:610.5999999999999px;top:517.6px;font-size:9.5px;color:#fff;font-family:'Liberation Sans';transform:scaleX(1.0588);">12</div>
<div class="t" style="left:616.1999999999999px;top:573.8000000000001px;font-size:9.5px;color:#fff;font-family:'Liberation Sans';transform:scaleX(1.0572);">8</div>
<div class="t" style="left:616.1999999999999px;top:630.0px;font-size:9.5px;color:#fff;font-family:'Liberation Sans';transform:scaleX(1.0572);">4</div>
<div class="t" style="left:616.1999999999999px;top:686.2px;font-size:9.5px;color:#fff;font-family:'Liberation Sans';transform:scaleX(1.0572);">0</div>
<div class="t" style="left:616.8px;top:698px;font-size:9.5px;color:#fff;font-family:'Liberation Sans';transform:scaleX(1.0969);">0.0</div>
<div class="t" style="left:723.9px;top:698px;font-size:9.5px;color:#fff;font-family:'Liberation Sans';transform:scaleX(1.0591);">8.5</div>
<div class="t" style="left:827.8499999999999px;top:698px;font-size:9.5px;color:#fff;font-family:'Liberation Sans';transform:scaleX(1.0541);">17.0</div>
<div class="t" style="left:934.3px;top:698px;font-size:9.5px;color:#fff;font-family:'Liberation Sans';transform:scaleX(1.0811);">25.4</div>
<div class="t" style="left:1041.05px;top:698px;font-size:9.5px;color:#fff;font-family:'Liberation Sans';transform:scaleX(0.9926);">33</div>
<div class="t" style="left:804.8px;top:708px;font-size:9px;color:#fff;font-family:'Liberation Sans';transform:scaleX(1.1350);">Distance in km</div>
<div class="t" style="left:593.3px;top:600px;font-family:'Liberation Mono';font-weight:700;font-size:13px;color:#fff;transform:rotate(-90deg);transform-origin:0 0;width:95px;height:14px;line-height:14px">km above MSL</div>
<svg width="569" height="443" viewBox="4 427 569 443" style="left:4px;top:427px"><defs>
<pattern id="dpffff00" width="2" height="2" patternUnits="userSpaceOnUse"><rect x="0" y="0" width="1" height="1" fill="#ffff00"/><rect x="1" y="1" width="1" height="1" fill="#ffff00"/></pattern>
<pattern id="dpdcdcdc" width="2" height="2" patternUnits="userSpaceOnUse"><rect x="0" y="0" width="1" height="1" fill="#dcdcdc"/><rect x="1" y="1" width="1" height="1" fill="#dcdcdc"/></pattern>
</defs><clipPath id="rclip"><rect x="55" y="458" width="433" height="337"/></clipPath><g shape-rendering="crispEdges"><rect x="198" y="515" width="4" height="3" fill="#00784b"/><rect x="202" y="515" width="28" height="3" fill="#c8c8c8"/><rect x="230" y="515" width="11" height="3" fill="#00784b"/><rect x="241" y="515" width="11" height="3" fill="#00e69b"/><rect x="252" y="515" width="4" height="3" fill="#c8c8c8"/><rect x="256" y="515" width="7" height="3" fill="#dc963c"/><rect x="263" y="515" width="7" height="3" fill="#00e69b"/><rect x="194" y="518" width="4" height="4" fill="#00e69b"/><rect x="198" y="518" width="4" height="4" fill="#00784b"/><rect x="202" y="518" width="14" height="4" fill="#c8c8c8"/><rect x="216" y="518" width="7" height="4" fill="#dc963c"/><rect x="223" y="518" width="7" height="4" fill="#c8c8c8"/><rect x="230" y="518" width="18" height="4" fill="#00784b"/><rect x="248" y="518" width="4" height="4" fill="#00e69b"/><rect x="252" y="518" width="11" height="4" fill="#c8c8c8"/><rect x="263" y="518" width="3" height="4" fill="#00e69b"/><rect x="266" y="518" width="4" height="4" fill="#00784b"/><rect x="270" y="518" width="4" height="4" fill="#00e69b"/><rect x="274" y="518" width="3" height="4" fill="#00784b"/><rect x="202" y="511" width="28" height="4" fill="#c8c8c8"/><rect x="230" y="511" width="11" height="4" fill="#00784b"/><rect x="241" y="511" width="11" height="4" fill="#00e69b"/><rect x="252" y="511" width="4" height="4" fill="#c8c8c8"/><rect x="256" y="511" width="7" height="4" fill="#dc963c"/><rect x="263" y="511" width="3" height="4" fill="#c8c8c8"/><rect x="266" y="511" width="8" height="4" fill="#00e69b"/><rect x="216" y="504" width="7" height="4" fill="#00e69b"/><rect x="223" y="504" width="18" height="4" fill="#00784b"/><rect x="241" y="504" width="7" height="4" fill="#00e69b"/><rect x="248" y="504" width="8" height="4" fill="#00784b"/><rect x="256" y="504" width="14" height="4" fill="#c8c8c8"/><rect x="270" y="504" width="7" height="4" fill="#00784b"/><rect x="191" y="526" width="7" height="3" fill="#00784b"/><rect x="198" y="526" width="4" height="3" fill="#00e69b"/><rect x="202" y="526" width="25" height="3" fill="#c8c8c8"/><rect x="227" y="526" width="3" height="3" fill="#00e69b"/><rect x="238" y="526" width="10" height="3" fill="#00e69b"/><rect x="248" y="526" width="8" height="3" fill="#c8c8c8"/><rect x="256" y="526" width="7" height="3" fill="#00e69b"/><rect x="248" y="479" width="8" height="3" fill="#00e69b"/><rect x="256" y="479" width="14" height="3" fill="#00784b"/><rect x="270" y="479" width="4" height="3" fill="#00e69b"/><rect x="274" y="479" width="10" height="3" fill="#00784b"/><rect x="223" y="497" width="4" height="3" fill="#00e69b"/><rect x="227" y="497" width="3" height="3" fill="#00784b"/><rect x="230" y="497" width="29" height="3" fill="#00e69b"/><rect x="259" y="497" width="15" height="3" fill="#c8c8c8"/><rect x="274" y="497" width="3" height="3" fill="#00784b"/><rect x="205" y="508" width="11" height="3" fill="#00784b"/><rect x="216" y="508" width="4" height="3" fill="#00e69b"/><rect x="223" y="508" width="15" height="3" fill="#00784b"/><rect x="238" y="508" width="10" height="3" fill="#00e69b"/><rect x="248" y="508" width="8" height="3" fill="#00784b"/><rect x="256" y="508" width="7" height="3" fill="#dc963c"/><rect x="263" y="508" width="3" height="3" fill="#c8c8c8"/><rect x="266" y="508" width="4" height="3" fill="#00e69b"/><rect x="270" y="508" width="4" height="3" fill="#00784b"/><rect x="274" y="508" width="3" height="3" fill="#00e69b"/><rect x="191" y="522" width="11" height="4" fill="#00784b"/><rect x="202" y="522" width="28" height="4" fill="#c8c8c8"/><rect x="230" y="522" width="8" height="4" fill="#00e69b"/><rect x="238" y="522" width="7" height="4" fill="#00784b"/><rect x="245" y="522" width="3" height="4" fill="#00e69b"/><rect x="248" y="522" width="15" height="4" fill="#c8c8c8"/><rect x="266" y="522" width="4" height="4" fill="#00784b"/><rect x="270" y="522" width="4" height="4" fill="#00e69b"/><rect x="274" y="522" width="3" height="4" fill="#00784b"/><rect x="241" y="536" width="7" height="4" fill="#00784b"/><rect x="241" y="482" width="7" height="4" fill="#00e69b"/><rect x="248" y="482" width="4" height="4" fill="#00784b"/><rect x="252" y="482" width="7" height="4" fill="#00e69b"/><rect x="259" y="482" width="11" height="4" fill="#c8c8c8"/><rect x="270" y="482" width="14" height="4" fill="#00784b"/><rect x="220" y="500" width="7" height="4" fill="#00e69b"/><rect x="227" y="500" width="7" height="4" fill="#00784b"/><rect x="234" y="500" width="11" height="4" fill="#00e69b"/><rect x="245" y="500" width="14" height="4" fill="#00784b"/><rect x="259" y="500" width="15" height="4" fill="#c8c8c8"/><rect x="274" y="500" width="3" height="4" fill="#00784b"/><rect x="230" y="493" width="29" height="4" fill="#00e69b"/><rect x="259" y="493" width="15" height="4" fill="#c8c8c8"/><rect x="274" y="493" width="7" height="4" fill="#00784b"/><rect x="148" y="529" width="7" height="4" fill="#00784b"/><rect x="155" y="529" width="3" height="4" fill="#00e69b"/><rect x="191" y="529" width="21" height="4" fill="#00784b"/><rect x="212" y="529" width="4" height="4" fill="#00e69b"/><rect x="216" y="529" width="11" height="4" fill="#00784b"/><rect x="241" y="529" width="4" height="4" fill="#00e69b"/><rect x="245" y="529" width="11" height="4" fill="#00784b"/><rect x="256" y="529" width="3" height="4" fill="#00e69b"/><rect x="263" y="529" width="3" height="4" fill="#00e69b"/><rect x="234" y="490" width="4" height="3" fill="#00784b"/><rect x="238" y="490" width="21" height="3" fill="#00e69b"/><rect x="259" y="490" width="18" height="3" fill="#c8c8c8"/><rect x="277" y="490" width="7" height="3" fill="#00784b"/><rect x="263" y="475" width="3" height="4" fill="#00784b"/><rect x="238" y="486" width="7" height="4" fill="#00e69b"/><rect x="245" y="486" width="11" height="4" fill="#00784b"/><rect x="256" y="486" width="3" height="4" fill="#00e69b"/><rect x="259" y="486" width="18" height="4" fill="#c8c8c8"/><rect x="277" y="486" width="11" height="4" fill="#00784b"/><rect x="148" y="533" width="3" height="3" fill="#00e69b"/><rect x="151" y="533" width="4" height="3" fill="#00784b"/><rect x="155" y="533" width="3" height="3" fill="#00e69b"/><rect x="220" y="533" width="3" height="3" fill="#00e69b"/><rect x="241" y="533" width="7" height="3" fill="#00e69b"/><rect x="248" y="533" width="8" height="3" fill="#00784b"/><rect x="263" y="533" width="3" height="3" fill="#00e69b"/><rect x="241" y="540" width="4" height="4" fill="#00784b"/><rect x="169" y="583" width="7" height="4" fill="#00784b"/><rect x="187" y="583" width="18" height="4" fill="#00e69b"/><rect x="209" y="583" width="3" height="4" fill="#00b4e6"/><rect x="245" y="583" width="3" height="4" fill="#00e69b"/><rect x="256" y="583" width="7" height="4" fill="#00e69b"/><rect x="263" y="583" width="3" height="4" fill="#0a6ee6"/><rect x="266" y="583" width="4" height="4" fill="#00e69b"/><rect x="270" y="583" width="18" height="4" fill="#00b4e6"/><rect x="169" y="587" width="7" height="3" fill="#00e69b"/><rect x="176" y="587" width="4" height="3" fill="#00b4e6"/><rect x="184" y="587" width="3" height="3" fill="#00784b"/><rect x="187" y="587" width="18" height="3" fill="#00e69b"/><rect x="205" y="587" width="4" height="3" fill="#00b4e6"/><rect x="234" y="587" width="4" height="3" fill="#0a6ee6"/><rect x="238" y="587" width="3" height="3" fill="#00784b"/><rect x="263" y="587" width="3" height="3" fill="#00e69b"/><rect x="266" y="587" width="4" height="3" fill="#0a6ee6"/><rect x="270" y="587" width="7" height="3" fill="#00b4e6"/><rect x="277" y="587" width="15" height="3" fill="#00e69b"/><rect x="169" y="605" width="4" height="3" fill="#c8c8c8"/><rect x="173" y="605" width="7" height="3" fill="#00784b"/><rect x="180" y="605" width="14" height="3" fill="#00e69b"/><rect x="194" y="605" width="8" height="3" fill="#00784b"/><rect x="202" y="605" width="18" height="3" fill="#00e69b"/><rect x="227" y="605" width="3" height="3" fill="#0a6ee6"/><rect x="230" y="605" width="4" height="3" fill="#00e69b"/><rect x="234" y="605" width="7" height="3" fill="#00b4e6"/><rect x="263" y="605" width="3" height="3" fill="#00784b"/><rect x="274" y="605" width="3" height="3" fill="#1e32dc"/><rect x="284" y="605" width="4" height="3" fill="#0a6ee6"/><rect x="288" y="605" width="4" height="3" fill="#1e32dc"/><rect x="295" y="605" width="7" height="3" fill="#00b4e6"/><rect x="169" y="608" width="11" height="4" fill="#00784b"/><rect x="180" y="608" width="22" height="4" fill="#00e69b"/><rect x="202" y="608" width="3" height="4" fill="#00784b"/><rect x="205" y="608" width="4" height="4" fill="#00e69b"/><rect x="212" y="608" width="8" height="4" fill="#00e69b"/><rect x="230" y="608" width="8" height="4" fill="#00b4e6"/><rect x="252" y="608" width="4" height="4" fill="#00e69b"/><rect x="259" y="608" width="4" height="4" fill="#0a6ee6"/><rect x="263" y="608" width="3" height="4" fill="#1e32dc"/><rect x="274" y="608" width="3" height="4" fill="#1e32dc"/><rect x="288" y="608" width="4" height="4" fill="#0a6ee6"/><rect x="299" y="608" width="3" height="4" fill="#00e69b"/><rect x="169" y="598" width="15" height="3" fill="#00784b"/><rect x="184" y="598" width="3" height="3" fill="#00b4e6"/><rect x="187" y="598" width="4" height="3" fill="#00784b"/><rect x="191" y="598" width="14" height="3" fill="#00e69b"/><rect x="205" y="598" width="4" height="3" fill="#00784b"/><rect x="220" y="598" width="3" height="3" fill="#00784b"/><rect x="223" y="598" width="4" height="3" fill="#00b4e6"/><rect x="227" y="598" width="3" height="3" fill="#00e69b"/><rect x="230" y="598" width="4" height="3" fill="#00b4e6"/><rect x="234" y="598" width="7" height="3" fill="#00e69b"/><rect x="245" y="598" width="3" height="3" fill="#1e32dc"/><rect x="252" y="598" width="4" height="3" fill="#00b4e6"/><rect x="256" y="598" width="7" height="3" fill="#00e69b"/><rect x="263" y="598" width="3" height="3" fill="#00b4e6"/><rect x="266" y="598" width="4" height="3" fill="#0a6ee6"/><rect x="270" y="598" width="4" height="3" fill="#00b4e6"/><rect x="274" y="598" width="3" height="3" fill="#00e69b"/><rect x="281" y="598" width="3" height="3" fill="#00b4e6"/><rect x="284" y="598" width="4" height="3" fill="#0a6ee6"/><rect x="295" y="598" width="4" height="3" fill="#00b4e6"/><rect x="299" y="598" width="7" height="3" fill="#0a6ee6"/><rect x="306" y="598" width="4" height="3" fill="#00e69b"/><rect x="169" y="580" width="4" height="3" fill="#00e69b"/><rect x="176" y="580" width="8" height="3" fill="#00b4e6"/><rect x="184" y="580" width="21" height="3" fill="#00e69b"/><rect x="220" y="580" width="7" height="3" fill="#00e69b"/><rect x="227" y="580" width="7" height="3" fill="#00b4e6"/><rect x="238" y="580" width="7" height="3" fill="#00e69b"/><rect x="256" y="580" width="3" height="3" fill="#00e69b"/><rect x="263" y="580" width="3" height="3" fill="#00e69b"/><rect x="266" y="580" width="4" height="3" fill="#00b4e6"/><rect x="270" y="580" width="4" height="3" fill="#0a6ee6"/><rect x="277" y="580" width="7" height="3" fill="#00b4e6"/><rect x="284" y="580" width="4" height="3" fill="#0a6ee6"/><rect x="169" y="612" width="18" height="4" fill="#00784b"/><rect x="187" y="612" width="18" height="4" fill="#00e69b"/><rect x="238" y="612" width="3" height="4" fill="#00e69b"/><rect x="248" y="612" width="4" height="4" fill="#0a6ee6"/><rect x="252" y="612" width="4" height="4" fill="#5a1ee6"/><rect x="266" y="612" width="4" height="4" fill="#5a1ee6"/><rect x="292" y="612" width="3" height="4" fill="#0a6ee6"/><rect x="310" y="612" width="7" height="4" fill="#00e69b"/><rect x="169" y="634" width="4" height="3" fill="#00e69b"/><rect x="173" y="634" width="3" height="3" fill="#00784b"/><rect x="176" y="634" width="4" height="3" fill="#00e69b"/><rect x="205" y="634" width="7" height="3" fill="#00784b"/><rect x="248" y="634" width="4" height="3" fill="#1e32dc"/><rect x="259" y="634" width="4" height="3" fill="#0a6ee6"/><rect x="263" y="634" width="3" height="3" fill="#1e32dc"/><rect x="270" y="634" width="4" height="3" fill="#0a6ee6"/><rect x="277" y="634" width="7" height="3" fill="#0a6ee6"/><rect x="288" y="634" width="4" height="3" fill="#00b4e6"/><rect x="328" y="634" width="3" height="3" fill="#00e69b"/><rect x="169" y="601" width="4" height="4" fill="#c8c8c8"/><rect x="173" y="601" width="3" height="4" fill="#00784b"/><rect x="176" y="601" width="4" height="4" fill="#00e69b"/><rect x="180" y="601" width="7" height="4" fill="#00784b"/><rect x="187" y="601" width="11" height="4" fill="#00e69b"/><rect x="198" y="601" width="4" height="4" fill="#00784b"/><rect x="202" y="601" width="3" height="4" fill="#00e69b"/><rect x="212" y="601" width="4" height="4" fill="#00e69b"/><rect x="220" y="601" width="7" height="4" fill="#0a6ee6"/><rect x="227" y="601" width="7" height="4" fill="#00b4e6"/><rect x="234" y="601" width="11" height="4" fill="#00e69b"/><rect x="252" y="601" width="4" height="4" fill="#5a1ee6"/><rect x="256" y="601" width="3" height="4" fill="#0a6ee6"/><rect x="259" y="601" width="4" height="4" fill="#5a1ee6"/><rect x="263" y="601" width="7" height="4" fill="#00b4e6"/><rect x="270" y="601" width="4" height="4" fill="#0a6ee6"/><rect x="277" y="601" width="4" height="4" fill="#00e69b"/><rect x="295" y="601" width="4" height="4" fill="#00b4e6"/><rect x="299" y="601" width="3" height="4" fill="#0a6ee6"/><rect x="302" y="601" width="4" height="4" fill="#00b4e6"/><rect x="317" y="601" width="3" height="4" fill="#00e69b"/><rect x="169" y="590" width="4" height="4" fill="#00784b"/><rect x="173" y="590" width="3" height="4" fill="#00e69b"/><rect x="180" y="590" width="11" height="4" fill="#00784b"/><rect x="191" y="590" width="14" height="4" fill="#00e69b"/><rect x="227" y="590" width="3" height="4" fill="#00b4e6"/><rect x="234" y="590" width="4" height="4" fill="#0a6ee6"/><rect x="238" y="590" width="7" height="4" fill="#00784b"/><rect x="248" y="590" width="4" height="4" fill="#00e69b"/><rect x="252" y="590" width="4" height="4" fill="#00784b"/><rect x="259" y="590" width="4" height="4" fill="#00b4e6"/><rect x="263" y="590" width="3" height="4" fill="#0a6ee6"/><rect x="266" y="590" width="4" height="4" fill="#00e69b"/><rect x="270" y="590" width="4" height="4" fill="#00b4e6"/><rect x="274" y="590" width="3" height="4" fill="#00e69b"/><rect x="277" y="590" width="4" height="4" fill="#00b4e6"/><rect x="281" y="590" width="7" height="4" fill="#00e69b"/><rect x="169" y="594" width="7" height="4" fill="#00784b"/><rect x="176" y="594" width="4" height="4" fill="#00e69b"/><rect x="180" y="594" width="4" height="4" fill="#00784b"/><rect x="184" y="594" width="3" height="4" fill="#00b4e6"/><rect x="187" y="594" width="22" height="4" fill="#00e69b"/><rect x="209" y="594" width="3" height="4" fill="#00b4e6"/><rect x="216" y="594" width="4" height="4" fill="#00b4e6"/><rect x="223" y="594" width="22" height="4" fill="#00e69b"/><rect x="245" y="594" width="3" height="4" fill="#1e32dc"/><rect x="248" y="594" width="4" height="4" fill="#0a6ee6"/><rect x="252" y="594" width="4" height="4" fill="#00b4e6"/><rect x="256" y="594" width="3" height="4" fill="#0a6ee6"/><rect x="259" y="594" width="4" height="4" fill="#00b4e6"/><rect x="263" y="594" width="3" height="4" fill="#00e69b"/><rect x="266" y="594" width="4" height="4" fill="#0a6ee6"/><rect x="270" y="594" width="4" height="4" fill="#00e69b"/><rect x="277" y="594" width="7" height="4" fill="#00e69b"/><rect x="288" y="594" width="4" height="4" fill="#00e69b"/><rect x="306" y="594" width="4" height="4" fill="#00b4e6"/><rect x="169" y="616" width="4" height="3" fill="#00e69b"/><rect x="173" y="616" width="7" height="3" fill="#00784b"/><rect x="209" y="616" width="3" height="3" fill="#00b4e6"/><rect x="277" y="616" width="4" height="3" fill="#5a1ee6"/><rect x="284" y="616" width="4" height="3" fill="#1e32dc"/><rect x="292" y="616" width="3" height="3" fill="#00b4e6"/><rect x="310" y="616" width="7" height="3" fill="#00b4e6"/><rect x="317" y="616" width="3" height="3" fill="#00e69b"/><rect x="191" y="576" width="7" height="4" fill="#00e69b"/><rect x="198" y="576" width="4" height="4" fill="#00784b"/><rect x="216" y="576" width="11" height="4" fill="#00e69b"/><rect x="230" y="576" width="8" height="4" fill="#00b4e6"/><rect x="238" y="576" width="3" height="4" fill="#0a6ee6"/><rect x="241" y="576" width="4" height="4" fill="#00b4e6"/><rect x="245" y="576" width="3" height="4" fill="#00e69b"/><rect x="263" y="576" width="3" height="4" fill="#00e69b"/><rect x="266" y="576" width="4" height="4" fill="#1e32dc"/><rect x="270" y="576" width="4" height="4" fill="#0a6ee6"/><rect x="274" y="576" width="3" height="4" fill="#00b4e6"/><rect x="277" y="576" width="7" height="4" fill="#0a6ee6"/><rect x="169" y="637" width="11" height="4" fill="#00e69b"/><rect x="187" y="637" width="4" height="4" fill="#c8c8c8"/><rect x="191" y="637" width="3" height="4" fill="#00b4e6"/><rect x="194" y="637" width="4" height="4" fill="#00784b"/><rect x="198" y="637" width="7" height="4" fill="#00b4e6"/><rect x="205" y="637" width="4" height="4" fill="#00784b"/><rect x="209" y="637" width="3" height="4" fill="#00e69b"/><rect x="212" y="637" width="4" height="4" fill="#00784b"/><rect x="252" y="637" width="4" height="4" fill="#0a6ee6"/><rect x="263" y="637" width="3" height="4" fill="#1e32dc"/><rect x="277" y="637" width="4" height="4" fill="#1e32dc"/><rect x="292" y="637" width="3" height="4" fill="#5a1ee6"/><rect x="302" y="637" width="4" height="4" fill="#00e69b"/><rect x="310" y="637" width="3" height="4" fill="#00b4e6"/><rect x="328" y="637" width="3" height="4" fill="#00e69b"/><rect x="169" y="630" width="11" height="4" fill="#00784b"/><rect x="248" y="630" width="4" height="4" fill="#0a6ee6"/><rect x="256" y="630" width="7" height="4" fill="#1e32dc"/><rect x="266" y="630" width="4" height="4" fill="#00b4e6"/><rect x="284" y="630" width="4" height="4" fill="#1e32dc"/><rect x="313" y="630" width="4" height="4" fill="#00b4e6"/><rect x="169" y="626" width="7" height="4" fill="#00784b"/><rect x="176" y="626" width="4" height="4" fill="#00e69b"/><rect x="245" y="626" width="3" height="4" fill="#1e32dc"/><rect x="248" y="626" width="4" height="4" fill="#0a6ee6"/><rect x="252" y="626" width="4" height="4" fill="#1e32dc"/><rect x="263" y="626" width="3" height="4" fill="#0a6ee6"/><rect x="266" y="626" width="4" height="4" fill="#5a1ee6"/><rect x="277" y="626" width="7" height="4" fill="#1e32dc"/><rect x="284" y="626" width="8" height="4" fill="#5a1ee6"/><rect x="299" y="626" width="3" height="4" fill="#0a6ee6"/><rect x="302" y="626" width="4" height="4" fill="#00e69b"/><rect x="324" y="626" width="4" height="4" fill="#00b4e6"/><rect x="169" y="623" width="4" height="3" fill="#c8c8c8"/><rect x="173" y="623" width="3" height="3" fill="#00e69b"/><rect x="176" y="623" width="4" height="3" fill="#00784b"/><rect x="245" y="623" width="3" height="3" fill="#5a1ee6"/><rect x="266" y="623" width="8" height="3" fill="#0a6ee6"/><rect x="274" y="623" width="3" height="3" fill="#1e32dc"/><rect x="288" y="623" width="4" height="3" fill="#0a6ee6"/><rect x="295" y="623" width="4" height="3" fill="#0a6ee6"/><rect x="299" y="623" width="3" height="3" fill="#1e32dc"/><rect x="169" y="619" width="7" height="4" fill="#c8c8c8"/><rect x="176" y="619" width="4" height="4" fill="#00e69b"/><rect x="248" y="619" width="4" height="4" fill="#5a1ee6"/><rect x="252" y="619" width="4" height="4" fill="#1e32dc"/><rect x="259" y="619" width="4" height="4" fill="#1e32dc"/><rect x="270" y="619" width="4" height="4" fill="#5a1ee6"/><rect x="288" y="619" width="4" height="4" fill="#0a6ee6"/><rect x="310" y="619" width="3" height="4" fill="#c8c8c8"/><rect x="313" y="619" width="4" height="4" fill="#00e69b"/><rect x="205" y="572" width="7" height="4" fill="#00b4e6"/><rect x="212" y="572" width="18" height="4" fill="#00e69b"/><rect x="230" y="572" width="4" height="4" fill="#00b4e6"/><rect x="234" y="572" width="4" height="4" fill="#00784b"/><rect x="238" y="572" width="3" height="4" fill="#00e69b"/><rect x="241" y="572" width="7" height="4" fill="#00b4e6"/><rect x="248" y="572" width="4" height="4" fill="#00784b"/><rect x="266" y="572" width="4" height="4" fill="#00e69b"/><rect x="288" y="572" width="4" height="4" fill="#00e69b"/><rect x="209" y="569" width="3" height="3" fill="#0a6ee6"/><rect x="212" y="569" width="4" height="3" fill="#00784b"/><rect x="216" y="569" width="22" height="3" fill="#00e69b"/><rect x="238" y="569" width="7" height="3" fill="#00784b"/><rect x="245" y="569" width="3" height="3" fill="#00b4e6"/><rect x="248" y="569" width="4" height="3" fill="#00784b"/><rect x="270" y="569" width="4" height="3" fill="#00e69b"/><rect x="288" y="569" width="4" height="3" fill="#00784b"/><rect x="212" y="554" width="4" height="4" fill="#00e69b"/><rect x="216" y="554" width="4" height="4" fill="#00b4e6"/><rect x="227" y="554" width="3" height="4" fill="#00e69b"/><rect x="234" y="554" width="11" height="4" fill="#00e69b"/><rect x="245" y="554" width="11" height="4" fill="#00784b"/><rect x="256" y="554" width="3" height="4" fill="#00b4e6"/><rect x="263" y="554" width="3" height="4" fill="#00784b"/><rect x="266" y="554" width="11" height="4" fill="#00e69b"/><rect x="277" y="554" width="7" height="4" fill="#00b4e6"/><rect x="284" y="554" width="4" height="4" fill="#00e69b"/><rect x="230" y="551" width="4" height="3" fill="#00e69b"/><rect x="238" y="551" width="3" height="3" fill="#00e69b"/><rect x="241" y="551" width="11" height="3" fill="#00b4e6"/><rect x="252" y="551" width="4" height="3" fill="#00e69b"/><rect x="256" y="551" width="3" height="3" fill="#00b4e6"/><rect x="259" y="551" width="4" height="3" fill="#00784b"/><rect x="263" y="551" width="14" height="3" fill="#00e69b"/><rect x="277" y="551" width="4" height="3" fill="#00b4e6"/><rect x="281" y="551" width="3" height="3" fill="#00e69b"/><rect x="234" y="547" width="7" height="4" fill="#00784b"/><rect x="241" y="547" width="7" height="4" fill="#00e69b"/><rect x="252" y="547" width="4" height="4" fill="#00e69b"/><rect x="270" y="547" width="4" height="4" fill="#00784b"/><rect x="274" y="547" width="3" height="4" fill="#00e69b"/><rect x="277" y="547" width="4" height="4" fill="#00b4e6"/><rect x="281" y="547" width="3" height="4" fill="#00784b"/><rect x="209" y="558" width="3" height="4" fill="#0a6ee6"/><rect x="212" y="558" width="8" height="4" fill="#00b4e6"/><rect x="223" y="558" width="4" height="4" fill="#0a6ee6"/><rect x="227" y="558" width="3" height="4" fill="#00b4e6"/><rect x="230" y="558" width="4" height="4" fill="#c8c8c8"/><rect x="234" y="558" width="7" height="4" fill="#00e69b"/><rect x="241" y="558" width="7" height="4" fill="#00784b"/><rect x="248" y="558" width="4" height="4" fill="#00e69b"/><rect x="252" y="558" width="4" height="4" fill="#00784b"/><rect x="259" y="558" width="4" height="4" fill="#00784b"/><rect x="263" y="558" width="3" height="4" fill="#00b4e6"/><rect x="266" y="558" width="4" height="4" fill="#00784b"/><rect x="270" y="558" width="4" height="4" fill="#00b4e6"/><rect x="274" y="558" width="7" height="4" fill="#0a6ee6"/><rect x="281" y="558" width="3" height="4" fill="#00e69b"/><rect x="209" y="562" width="7" height="3" fill="#00784b"/><rect x="216" y="562" width="4" height="3" fill="#00b4e6"/><rect x="220" y="562" width="3" height="3" fill="#00e69b"/><rect x="223" y="562" width="4" height="3" fill="#0a6ee6"/><rect x="234" y="562" width="7" height="3" fill="#00784b"/><rect x="241" y="562" width="4" height="3" fill="#00e69b"/><rect x="245" y="562" width="3" height="3" fill="#00b4e6"/><rect x="248" y="562" width="8" height="3" fill="#00e69b"/><rect x="263" y="562" width="7" height="3" fill="#00b4e6"/><rect x="270" y="562" width="18" height="3" fill="#00e69b"/><rect x="288" y="562" width="4" height="3" fill="#00784b"/><rect x="209" y="565" width="7" height="4" fill="#00784b"/><rect x="216" y="565" width="7" height="4" fill="#00b4e6"/><rect x="223" y="565" width="7" height="4" fill="#00e69b"/><rect x="234" y="565" width="4" height="4" fill="#00e69b"/><rect x="238" y="565" width="7" height="4" fill="#00b4e6"/><rect x="245" y="565" width="7" height="4" fill="#00784b"/><rect x="266" y="565" width="8" height="4" fill="#00e69b"/><rect x="284" y="565" width="4" height="4" fill="#00784b"/><rect x="288" y="565" width="4" height="4" fill="#0a6ee6"/><rect x="230" y="544" width="4" height="3" fill="#00784b"/><rect x="238" y="544" width="10" height="3" fill="#00e69b"/><rect x="252" y="544" width="4" height="3" fill="#00b4e6"/><rect x="256" y="544" width="3" height="3" fill="#00784b"/><rect x="259" y="544" width="4" height="3" fill="#00e69b"/><rect x="274" y="544" width="3" height="3" fill="#00b4e6"/><rect x="166" y="641" width="14" height="3" fill="#00e69b"/><rect x="184" y="641" width="3" height="3" fill="#00e69b"/><rect x="187" y="641" width="4" height="3" fill="#00b4e6"/><rect x="191" y="641" width="3" height="3" fill="#c8c8c8"/><rect x="194" y="641" width="4" height="3" fill="#00b4e6"/><rect x="198" y="641" width="4" height="3" fill="#c8c8c8"/><rect x="202" y="641" width="14" height="3" fill="#00784b"/><rect x="216" y="641" width="4" height="3" fill="#00b4e6"/><rect x="234" y="641" width="4" height="3" fill="#0a6ee6"/><rect x="259" y="641" width="4" height="3" fill="#0a6ee6"/><rect x="263" y="641" width="3" height="3" fill="#1e32dc"/><rect x="266" y="641" width="4" height="3" fill="#00e69b"/><rect x="270" y="641" width="4" height="3" fill="#1e32dc"/><rect x="274" y="641" width="3" height="3" fill="#0a6ee6"/><rect x="277" y="641" width="4" height="3" fill="#1e32dc"/><rect x="288" y="641" width="4" height="3" fill="#0a6ee6"/><rect x="306" y="641" width="4" height="3" fill="#00b4e6"/><rect x="317" y="641" width="3" height="3" fill="#00b4e6"/><rect x="166" y="644" width="3" height="4" fill="#00784b"/><rect x="169" y="644" width="7" height="4" fill="#00e69b"/><rect x="176" y="644" width="4" height="4" fill="#00784b"/><rect x="180" y="644" width="7" height="4" fill="#00e69b"/><rect x="187" y="644" width="11" height="4" fill="#00784b"/><rect x="198" y="644" width="4" height="4" fill="#00b4e6"/><rect x="205" y="644" width="4" height="4" fill="#00e69b"/><rect x="212" y="644" width="4" height="4" fill="#00784b"/><rect x="216" y="644" width="4" height="4" fill="#00b4e6"/><rect x="234" y="644" width="4" height="4" fill="#00e69b"/><rect x="238" y="644" width="7" height="4" fill="#00b4e6"/><rect x="245" y="644" width="3" height="4" fill="#00784b"/><rect x="248" y="644" width="4" height="4" fill="#0a6ee6"/><rect x="252" y="644" width="4" height="4" fill="#1e32dc"/><rect x="259" y="644" width="4" height="4" fill="#00e69b"/><rect x="263" y="644" width="3" height="4" fill="#0a6ee6"/><rect x="266" y="644" width="4" height="4" fill="#00e69b"/><rect x="270" y="644" width="4" height="4" fill="#00b4e6"/><rect x="274" y="644" width="3" height="4" fill="#00e69b"/><rect x="281" y="644" width="3" height="4" fill="#1e32dc"/><rect x="284" y="644" width="4" height="4" fill="#0a6ee6"/><rect x="288" y="644" width="4" height="4" fill="#00b4e6"/><rect x="292" y="644" width="3" height="4" fill="#00e69b"/><rect x="295" y="644" width="4" height="4" fill="#5a1ee6"/><rect x="302" y="644" width="8" height="4" fill="#00e69b"/><rect x="324" y="644" width="4" height="4" fill="#00e69b"/><rect x="173" y="648" width="7" height="4" fill="#00e69b"/><rect x="180" y="648" width="4" height="4" fill="#00b4e6"/><rect x="184" y="648" width="3" height="4" fill="#00784b"/><rect x="187" y="648" width="11" height="4" fill="#00e69b"/><rect x="198" y="648" width="7" height="4" fill="#00784b"/><rect x="205" y="648" width="11" height="4" fill="#00e69b"/><rect x="238" y="648" width="7" height="4" fill="#00b4e6"/><rect x="245" y="648" width="3" height="4" fill="#00e69b"/><rect x="252" y="648" width="4" height="4" fill="#00784b"/><rect x="256" y="648" width="3" height="4" fill="#00e69b"/><rect x="259" y="648" width="4" height="4" fill="#c8c8c8"/><rect x="263" y="648" width="3" height="4" fill="#0a6ee6"/><rect x="266" y="648" width="11" height="4" fill="#00b4e6"/><rect x="277" y="648" width="4" height="4" fill="#0a6ee6"/><rect x="281" y="648" width="3" height="4" fill="#1e32dc"/><rect x="284" y="648" width="4" height="4" fill="#00b4e6"/><rect x="288" y="648" width="4" height="4" fill="#00e69b"/><rect x="292" y="648" width="3" height="4" fill="#0a6ee6"/><rect x="295" y="648" width="4" height="4" fill="#00784b"/><rect x="317" y="648" width="3" height="4" fill="#00b4e6"/><rect x="184" y="698" width="10" height="4" fill="#00e69b"/><rect x="194" y="698" width="4" height="4" fill="#00784b"/><rect x="216" y="698" width="7" height="4" fill="#00b4e6"/><rect x="234" y="698" width="11" height="4" fill="#00b4e6"/><rect x="248" y="698" width="4" height="4" fill="#00e69b"/><rect x="252" y="698" width="4" height="4" fill="#00784b"/><rect x="274" y="698" width="7" height="4" fill="#00784b"/><rect x="284" y="698" width="4" height="4" fill="#00b4e6"/><rect x="288" y="698" width="7" height="4" fill="#00e69b"/><rect x="295" y="698" width="4" height="4" fill="#00b4e6"/><rect x="353" y="698" width="3" height="4" fill="#00784b"/><rect x="184" y="695" width="7" height="3" fill="#00784b"/><rect x="191" y="695" width="3" height="3" fill="#00e69b"/><rect x="194" y="695" width="4" height="3" fill="#00784b"/><rect x="198" y="695" width="4" height="3" fill="#00e69b"/><rect x="202" y="695" width="3" height="3" fill="#00784b"/><rect x="212" y="695" width="8" height="3" fill="#00b4e6"/><rect x="230" y="695" width="4" height="3" fill="#00b4e6"/><rect x="234" y="695" width="4" height="3" fill="#00e69b"/><rect x="238" y="695" width="3" height="3" fill="#00b4e6"/><rect x="245" y="695" width="3" height="3" fill="#00b4e6"/><rect x="266" y="695" width="8" height="3" fill="#00b4e6"/><rect x="274" y="695" width="10" height="3" fill="#00e69b"/><rect x="284" y="695" width="4" height="3" fill="#00b4e6"/><rect x="288" y="695" width="11" height="3" fill="#00e69b"/><rect x="166" y="655" width="32" height="4" fill="#00e69b"/><rect x="198" y="655" width="4" height="4" fill="#00784b"/><rect x="212" y="655" width="4" height="4" fill="#00b4e6"/><rect x="216" y="655" width="7" height="4" fill="#00e69b"/><rect x="238" y="655" width="3" height="4" fill="#0a6ee6"/><rect x="241" y="655" width="11" height="4" fill="#00e69b"/><rect x="252" y="655" width="4" height="4" fill="#00b4e6"/><rect x="256" y="655" width="3" height="4" fill="#00e69b"/><rect x="259" y="655" width="7" height="4" fill="#0a6ee6"/><rect x="266" y="655" width="8" height="4" fill="#00b4e6"/><rect x="274" y="655" width="3" height="4" fill="#00e69b"/><rect x="277" y="655" width="4" height="4" fill="#00b4e6"/><rect x="281" y="655" width="7" height="4" fill="#00e69b"/><rect x="288" y="655" width="7" height="4" fill="#c8c8c8"/><rect x="295" y="655" width="4" height="4" fill="#00b4e6"/><rect x="299" y="655" width="3" height="4" fill="#00784b"/><rect x="306" y="655" width="4" height="4" fill="#00b4e6"/><rect x="173" y="652" width="3" height="3" fill="#00e69b"/><rect x="176" y="652" width="8" height="3" fill="#00784b"/><rect x="184" y="652" width="18" height="3" fill="#00e69b"/><rect x="212" y="652" width="4" height="3" fill="#00b4e6"/><rect x="220" y="652" width="3" height="3" fill="#00e69b"/><rect x="238" y="652" width="3" height="3" fill="#0a6ee6"/><rect x="241" y="652" width="4" height="3" fill="#00b4e6"/><rect x="245" y="652" width="3" height="3" fill="#00e69b"/><rect x="248" y="652" width="4" height="3" fill="#c8c8c8"/><rect x="252" y="652" width="7" height="3" fill="#00784b"/><rect x="259" y="652" width="4" height="3" fill="#c8c8c8"/><rect x="263" y="652" width="3" height="3" fill="#0a6ee6"/><rect x="266" y="652" width="11" height="3" fill="#00b4e6"/><rect x="277" y="652" width="4" height="3" fill="#00e69b"/><rect x="281" y="652" width="3" height="3" fill="#00784b"/><rect x="284" y="652" width="4" height="3" fill="#00e69b"/><rect x="288" y="652" width="7" height="3" fill="#00784b"/><rect x="295" y="652" width="4" height="3" fill="#c8c8c8"/><rect x="299" y="652" width="3" height="3" fill="#00784b"/><rect x="302" y="652" width="4" height="3" fill="#0a6ee6"/><rect x="324" y="652" width="7" height="3" fill="#00784b"/><rect x="184" y="688" width="7" height="3" fill="#00784b"/><rect x="191" y="688" width="3" height="3" fill="#00e69b"/><rect x="194" y="688" width="4" height="3" fill="#00784b"/><rect x="202" y="688" width="7" height="3" fill="#00784b"/><rect x="209" y="688" width="3" height="3" fill="#00e69b"/><rect x="234" y="688" width="4" height="3" fill="#00b4e6"/><rect x="238" y="688" width="3" height="3" fill="#00784b"/><rect x="241" y="688" width="4" height="3" fill="#00e69b"/><rect x="252" y="688" width="7" height="3" fill="#00b4e6"/><rect x="184" y="680" width="14" height="4" fill="#00e69b"/><rect x="198" y="680" width="4" height="4" fill="#00784b"/><rect x="202" y="680" width="3" height="4" fill="#00b4e6"/><rect x="205" y="680" width="4" height="4" fill="#00784b"/><rect x="209" y="680" width="11" height="4" fill="#00e69b"/><rect x="230" y="680" width="4" height="4" fill="#00e69b"/><rect x="234" y="680" width="4" height="4" fill="#0a6ee6"/><rect x="274" y="680" width="7" height="4" fill="#00b4e6"/><rect x="310" y="680" width="7" height="4" fill="#00e69b"/><rect x="184" y="677" width="3" height="3" fill="#c8c8c8"/><rect x="187" y="677" width="15" height="3" fill="#00e69b"/><rect x="202" y="677" width="3" height="3" fill="#00b4e6"/><rect x="205" y="677" width="4" height="3" fill="#00784b"/><rect x="209" y="677" width="7" height="3" fill="#00e69b"/><rect x="220" y="677" width="3" height="3" fill="#00e69b"/><rect x="230" y="677" width="4" height="3" fill="#0a6ee6"/><rect x="234" y="677" width="4" height="3" fill="#00e69b"/><rect x="263" y="677" width="3" height="3" fill="#00e69b"/><rect x="266" y="677" width="4" height="3" fill="#0a6ee6"/><rect x="270" y="677" width="4" height="3" fill="#00e69b"/><rect x="274" y="677" width="3" height="3" fill="#0a6ee6"/><rect x="277" y="677" width="4" height="3" fill="#00b4e6"/><rect x="310" y="677" width="7" height="3" fill="#00e69b"/><rect x="166" y="659" width="3" height="3" fill="#00e69b"/><rect x="180" y="659" width="4" height="3" fill="#00e69b"/><rect x="184" y="659" width="7" height="3" fill="#00784b"/><rect x="191" y="659" width="3" height="3" fill="#00e69b"/><rect x="194" y="659" width="4" height="3" fill="#00784b"/><rect x="198" y="659" width="4" height="3" fill="#00e69b"/><rect x="212" y="659" width="4" height="3" fill="#00e69b"/><rect x="216" y="659" width="4" height="3" fill="#00b4e6"/><rect x="234" y="659" width="4" height="3" fill="#00e69b"/><rect x="238" y="659" width="7" height="3" fill="#0a6ee6"/><rect x="245" y="659" width="18" height="3" fill="#00b4e6"/><rect x="263" y="659" width="11" height="3" fill="#00e69b"/><rect x="274" y="659" width="3" height="3" fill="#0a6ee6"/><rect x="277" y="659" width="4" height="3" fill="#00b4e6"/><rect x="281" y="659" width="3" height="3" fill="#00784b"/><rect x="284" y="659" width="8" height="3" fill="#00e69b"/><rect x="295" y="659" width="4" height="3" fill="#00784b"/><rect x="299" y="659" width="7" height="3" fill="#00b4e6"/><rect x="310" y="659" width="3" height="3" fill="#00b4e6"/><rect x="184" y="702" width="7" height="4" fill="#00e69b"/><rect x="216" y="702" width="4" height="4" fill="#00b4e6"/><rect x="223" y="702" width="4" height="4" fill="#00e69b"/><rect x="234" y="702" width="14" height="4" fill="#00e69b"/><rect x="248" y="702" width="4" height="4" fill="#00784b"/><rect x="252" y="702" width="4" height="4" fill="#00e69b"/><rect x="270" y="702" width="4" height="4" fill="#00b4e6"/><rect x="277" y="702" width="4" height="4" fill="#00e69b"/><rect x="284" y="702" width="8" height="4" fill="#00b4e6"/><rect x="292" y="702" width="3" height="4" fill="#00e69b"/><rect x="295" y="702" width="4" height="4" fill="#00784b"/><rect x="342" y="702" width="7" height="4" fill="#00784b"/><rect x="353" y="702" width="3" height="4" fill="#00784b"/><rect x="184" y="662" width="3" height="4" fill="#00b4e6"/><rect x="191" y="662" width="7" height="4" fill="#00784b"/><rect x="198" y="662" width="4" height="4" fill="#00e69b"/><rect x="205" y="662" width="11" height="4" fill="#00e69b"/><rect x="216" y="662" width="7" height="4" fill="#00784b"/><rect x="238" y="662" width="10" height="4" fill="#00e69b"/><rect x="248" y="662" width="11" height="4" fill="#00b4e6"/><rect x="263" y="662" width="7" height="4" fill="#00b4e6"/><rect x="270" y="662" width="4" height="4" fill="#00e69b"/><rect x="274" y="662" width="7" height="4" fill="#00b4e6"/><rect x="281" y="662" width="3" height="4" fill="#00784b"/><rect x="284" y="662" width="11" height="4" fill="#00e69b"/><rect x="295" y="662" width="4" height="4" fill="#00784b"/><rect x="299" y="662" width="3" height="4" fill="#00b4e6"/><rect x="302" y="662" width="4" height="4" fill="#c8c8c8"/><rect x="306" y="662" width="4" height="4" fill="#00784b"/><rect x="335" y="662" width="7" height="4" fill="#00e69b"/><rect x="184" y="691" width="3" height="4" fill="#c8c8c8"/><rect x="187" y="691" width="11" height="4" fill="#00e69b"/><rect x="205" y="691" width="4" height="4" fill="#00b4e6"/><rect x="234" y="691" width="4" height="4" fill="#00b4e6"/><rect x="238" y="691" width="7" height="4" fill="#00e69b"/><rect x="248" y="691" width="4" height="4" fill="#0a6ee6"/><rect x="263" y="691" width="3" height="4" fill="#00e69b"/><rect x="266" y="691" width="4" height="4" fill="#0a6ee6"/><rect x="277" y="691" width="15" height="4" fill="#00e69b"/><rect x="292" y="691" width="7" height="4" fill="#00784b"/><rect x="184" y="673" width="7" height="4" fill="#00784b"/><rect x="191" y="673" width="11" height="4" fill="#00e69b"/><rect x="202" y="673" width="3" height="4" fill="#00784b"/><rect x="205" y="673" width="15" height="4" fill="#00e69b"/><rect x="223" y="673" width="4" height="4" fill="#00e69b"/><rect x="227" y="673" width="14" height="4" fill="#00784b"/><rect x="241" y="673" width="4" height="4" fill="#00e69b"/><rect x="266" y="673" width="4" height="4" fill="#00784b"/><rect x="274" y="673" width="3" height="4" fill="#00784b"/><rect x="277" y="673" width="4" height="4" fill="#00e69b"/><rect x="281" y="673" width="3" height="4" fill="#00784b"/><rect x="335" y="673" width="3" height="4" fill="#c8c8c8"/><rect x="338" y="673" width="4" height="4" fill="#00e69b"/><rect x="184" y="684" width="7" height="4" fill="#00e69b"/><rect x="191" y="684" width="3" height="4" fill="#00b4e6"/><rect x="194" y="684" width="4" height="4" fill="#c8c8c8"/><rect x="198" y="684" width="7" height="4" fill="#00e69b"/><rect x="205" y="684" width="4" height="4" fill="#c8c8c8"/><rect x="209" y="684" width="11" height="4" fill="#00e69b"/><rect x="234" y="684" width="4" height="4" fill="#00e69b"/><rect x="238" y="684" width="10" height="4" fill="#00784b"/><rect x="310" y="684" width="7" height="4" fill="#00e69b"/><rect x="184" y="670" width="7" height="3" fill="#00784b"/><rect x="191" y="670" width="7" height="3" fill="#00e69b"/><rect x="198" y="670" width="4" height="3" fill="#00784b"/><rect x="202" y="670" width="3" height="3" fill="#00e69b"/><rect x="205" y="670" width="4" height="3" fill="#00784b"/><rect x="209" y="670" width="3" height="3" fill="#00e69b"/><rect x="212" y="670" width="8" height="3" fill="#00784b"/><rect x="220" y="670" width="3" height="3" fill="#00e69b"/><rect x="230" y="670" width="4" height="3" fill="#00e69b"/><rect x="238" y="670" width="7" height="3" fill="#00b4e6"/><rect x="245" y="670" width="3" height="3" fill="#00e69b"/><rect x="248" y="670" width="4" height="3" fill="#0a6ee6"/><rect x="252" y="670" width="7" height="3" fill="#00b4e6"/><rect x="259" y="670" width="7" height="3" fill="#0a6ee6"/><rect x="288" y="670" width="4" height="3" fill="#00784b"/><rect x="292" y="670" width="7" height="3" fill="#00b4e6"/><rect x="299" y="670" width="3" height="3" fill="#c8c8c8"/><rect x="302" y="670" width="4" height="3" fill="#00784b"/><rect x="306" y="670" width="4" height="3" fill="#00e69b"/><rect x="335" y="670" width="7" height="3" fill="#c8c8c8"/><rect x="198" y="666" width="11" height="4" fill="#00e69b"/><rect x="209" y="666" width="3" height="4" fill="#c8c8c8"/><rect x="212" y="666" width="8" height="4" fill="#00b4e6"/><rect x="220" y="666" width="3" height="4" fill="#00784b"/><rect x="223" y="666" width="4" height="4" fill="#00e69b"/><rect x="230" y="666" width="8" height="4" fill="#00e69b"/><rect x="238" y="666" width="3" height="4" fill="#00784b"/><rect x="241" y="666" width="4" height="4" fill="#00e69b"/><rect x="252" y="666" width="4" height="4" fill="#00b4e6"/><rect x="263" y="666" width="7" height="4" fill="#00b4e6"/><rect x="270" y="666" width="7" height="4" fill="#00e69b"/><rect x="277" y="666" width="4" height="4" fill="#0a6ee6"/><rect x="281" y="666" width="18" height="4" fill="#00e69b"/><rect x="299" y="666" width="3" height="4" fill="#00b4e6"/><rect x="302" y="666" width="4" height="4" fill="#c8c8c8"/><rect x="306" y="666" width="4" height="4" fill="#0a6ee6"/><rect x="335" y="666" width="7" height="4" fill="#00e69b"/><rect x="184" y="706" width="3" height="3" fill="#00784b"/><rect x="187" y="706" width="4" height="3" fill="#00e69b"/><rect x="238" y="706" width="3" height="3" fill="#00e69b"/><rect x="241" y="706" width="7" height="3" fill="#00784b"/><rect x="342" y="706" width="7" height="3" fill="#dc963c"/><rect x="349" y="706" width="4" height="3" fill="#00e69b"/><rect x="353" y="706" width="7" height="3" fill="#00784b"/><rect x="173" y="709" width="3" height="4" fill="#00e69b"/><rect x="234" y="709" width="7" height="4" fill="#00784b"/><rect x="241" y="709" width="4" height="4" fill="#00e69b"/><rect x="245" y="709" width="3" height="4" fill="#00784b"/><rect x="342" y="709" width="7" height="4" fill="#dc963c"/><rect x="349" y="709" width="7" height="4" fill="#00e69b"/><rect x="356" y="709" width="4" height="4" fill="#00784b"/><rect x="180" y="720" width="7" height="4" fill="#00e69b"/><rect x="230" y="720" width="8" height="4" fill="#00784b"/><rect x="241" y="720" width="4" height="4" fill="#00e69b"/><rect x="256" y="720" width="10" height="4" fill="#00e69b"/><rect x="335" y="720" width="3" height="4" fill="#00e69b"/><rect x="338" y="720" width="8" height="4" fill="#00784b"/><rect x="346" y="720" width="7" height="4" fill="#c8c8c8"/><rect x="353" y="720" width="3" height="4" fill="#00784b"/><rect x="356" y="720" width="4" height="4" fill="#00e69b"/><rect x="180" y="724" width="7" height="3" fill="#00e69b"/><rect x="212" y="724" width="8" height="3" fill="#00e69b"/><rect x="220" y="724" width="3" height="3" fill="#00784b"/><rect x="223" y="724" width="4" height="3" fill="#00e69b"/><rect x="227" y="724" width="3" height="3" fill="#c8c8c8"/><rect x="230" y="724" width="18" height="3" fill="#00784b"/><rect x="256" y="724" width="10" height="3" fill="#00e69b"/><rect x="335" y="724" width="3" height="3" fill="#00784b"/><rect x="338" y="724" width="18" height="3" fill="#c8c8c8"/><rect x="356" y="724" width="8" height="3" fill="#00e69b"/><rect x="230" y="716" width="15" height="4" fill="#00e69b"/><rect x="338" y="716" width="22" height="4" fill="#00784b"/><rect x="227" y="756" width="7" height="4" fill="#00e69b"/><rect x="356" y="756" width="11" height="4" fill="#00784b"/><rect x="367" y="756" width="4" height="4" fill="#c8c8c8"/><rect x="234" y="713" width="11" height="3" fill="#00e69b"/><rect x="338" y="713" width="8" height="3" fill="#00784b"/><rect x="346" y="713" width="3" height="3" fill="#00e69b"/><rect x="349" y="713" width="7" height="3" fill="#00784b"/><rect x="220" y="745" width="3" height="4" fill="#00e69b"/><rect x="223" y="745" width="4" height="4" fill="#00784b"/><rect x="227" y="745" width="3" height="4" fill="#00e69b"/><rect x="230" y="745" width="8" height="4" fill="#c8c8c8"/><rect x="346" y="745" width="7" height="4" fill="#00e69b"/><rect x="353" y="745" width="3" height="4" fill="#00784b"/><rect x="356" y="745" width="4" height="4" fill="#00e69b"/><rect x="360" y="745" width="11" height="4" fill="#c8c8c8"/><rect x="371" y="745" width="3" height="4" fill="#00e69b"/><rect x="212" y="727" width="4" height="4" fill="#00e69b"/><rect x="216" y="727" width="4" height="4" fill="#00784b"/><rect x="220" y="727" width="14" height="4" fill="#c8c8c8"/><rect x="234" y="727" width="14" height="4" fill="#00784b"/><rect x="256" y="727" width="10" height="4" fill="#00e69b"/><rect x="335" y="727" width="3" height="4" fill="#00784b"/><rect x="338" y="727" width="11" height="4" fill="#c8c8c8"/><rect x="349" y="727" width="7" height="4" fill="#dc963c"/><rect x="356" y="727" width="4" height="4" fill="#c8c8c8"/><rect x="360" y="727" width="4" height="4" fill="#00e69b"/><rect x="220" y="742" width="7" height="3" fill="#00e69b"/><rect x="227" y="742" width="3" height="3" fill="#00784b"/><rect x="230" y="742" width="8" height="3" fill="#00e69b"/><rect x="342" y="742" width="4" height="3" fill="#00784b"/><rect x="346" y="742" width="3" height="3" fill="#00e69b"/><rect x="349" y="742" width="7" height="3" fill="#00784b"/><rect x="356" y="742" width="4" height="3" fill="#00e69b"/><rect x="360" y="742" width="11" height="3" fill="#00784b"/><rect x="216" y="752" width="4" height="4" fill="#00e69b"/><rect x="220" y="752" width="3" height="4" fill="#00784b"/><rect x="223" y="752" width="7" height="4" fill="#00e69b"/><rect x="230" y="752" width="4" height="4" fill="#00784b"/><rect x="234" y="752" width="4" height="4" fill="#00e69b"/><rect x="353" y="752" width="3" height="4" fill="#00784b"/><rect x="356" y="752" width="4" height="4" fill="#00e69b"/><rect x="360" y="752" width="11" height="4" fill="#c8c8c8"/><rect x="212" y="749" width="22" height="3" fill="#00e69b"/><rect x="234" y="749" width="4" height="3" fill="#00784b"/><rect x="349" y="749" width="11" height="3" fill="#00e69b"/><rect x="360" y="749" width="11" height="3" fill="#c8c8c8"/><rect x="371" y="749" width="3" height="3" fill="#00e69b"/><rect x="212" y="734" width="4" height="4" fill="#00784b"/><rect x="216" y="734" width="4" height="4" fill="#00e69b"/><rect x="220" y="734" width="14" height="4" fill="#c8c8c8"/><rect x="234" y="734" width="11" height="4" fill="#00784b"/><rect x="338" y="734" width="8" height="4" fill="#00784b"/><rect x="346" y="734" width="3" height="4" fill="#c8c8c8"/><rect x="349" y="734" width="7" height="4" fill="#dc963c"/><rect x="356" y="734" width="4" height="4" fill="#c8c8c8"/><rect x="360" y="734" width="4" height="4" fill="#00e69b"/><rect x="216" y="738" width="4" height="4" fill="#00784b"/><rect x="220" y="738" width="3" height="4" fill="#00e69b"/><rect x="223" y="738" width="7" height="4" fill="#c8c8c8"/><rect x="230" y="738" width="4" height="4" fill="#00784b"/><rect x="338" y="738" width="11" height="4" fill="#00784b"/><rect x="349" y="738" width="15" height="4" fill="#00e69b"/><rect x="212" y="731" width="4" height="3" fill="#00784b"/><rect x="216" y="731" width="4" height="3" fill="#00e69b"/><rect x="220" y="731" width="14" height="3" fill="#c8c8c8"/><rect x="234" y="731" width="11" height="3" fill="#00784b"/><rect x="245" y="731" width="3" height="3" fill="#00e69b"/><rect x="338" y="731" width="11" height="3" fill="#c8c8c8"/><rect x="349" y="731" width="7" height="3" fill="#dc963c"/><rect x="356" y="731" width="4" height="3" fill="#c8c8c8"/><rect x="360" y="731" width="4" height="3" fill="#00e69b"/><rect x="356" y="760" width="8" height="3" fill="#00784b"/></g><g clip-path="url(#rclip)" fill="none" stroke="#fff" stroke-width="1" shape-rendering="crispEdges"><circle cx="274.3" cy="623.5" r="28.3"/><circle cx="274.3" cy="623.5" r="56.6"/><circle cx="274.3" cy="623.5" r="84.9"/><circle cx="274.3" cy="623.5" r="113.2"/><circle cx="274.3" cy="623.5" r="141.5"/><circle cx="274.3" cy="623.5" r="169.8"/><circle cx="274.3" cy="623.5" r="198.1"/><circle cx="274.3" cy="623.5" r="226.4"/><line x1="55" y1="623.5" x2="488" y2="623.5"/><line x1="274.3" y1="458" x2="274.3" y2="795"/><line x1="114.2" y1="463.4" x2="434.4" y2="783.6"/><line x1="114.2" y1="783.6" x2="434.4" y2="463.4"/></g><rect x="273" y="640" width="3" height="30" fill="#fff"/><polygon points="267,623 444,633.5 444,636.5 267,625" fill="#ff0000"/><circle cx="290.5" cy="625.4" r="7" fill="none" stroke="#ffa500" stroke-width="1"/><text x="278" y="641" font-family="Liberation Sans" font-size="7" fill="#ffa500">b&lt;-95-8</text><line x1="285" y1="467.5" x2="296" y2="467.5" stroke="#f0e68c"/><line x1="290.5" y1="462" x2="290.5" y2="473" stroke="#f0e68c"/><text x="285" y="807" font-family="Liberation Sans" font-size="6" fill="#ffff00">-95</text><text x="13" y="463" font-family="Liberation Sans" font-size="6" fill="#ffff00">10</text><g shape-rendering="crispEdges"><rect x="488" y="458" width="84" height="1" fill="#8c8c8c"/><rect x="490" y="485" width="10" height="7" fill="#fa8080"/><rect x="490" y="492" width="10" height="7" fill="#fa8c96"/><rect x="490" y="499" width="10" height="7" fill="#faaa64"/><rect x="490" y="506" width="10" height="7" fill="#fad7b4"/><rect x="490" y="513" width="10" height="7" fill="#fadc14"/><rect x="490" y="520" width="10" height="7" fill="#f0b428"/><rect x="490" y="527" width="10" height="7" fill="#d7963c"/><rect x="490" y="534" width="10" height="7" fill="#c8c8c8"/><rect x="490" y="541" width="10" height="7" fill="#00784b"/><rect x="490" y="548" width="10" height="7" fill="#00e69b"/><rect x="490" y="555" width="10" height="7" fill="#00b4e6"/><rect x="490" y="562" width="10" height="7" fill="#0a6ee6"/><rect x="490" y="569" width="10" height="7" fill="#1e32dc"/><rect x="490" y="576" width="10" height="7" fill="#5a1ee6"/><rect x="490" y="583" width="10" height="7" fill="#7314f0"/><rect x="490" y="590" width="10" height="7" fill="#8c0af0"/><rect x="488" y="626" width="84" height="1" fill="#8c8c8c"/><rect x="490" y="653" width="10" height="7" fill="#fa8080"/><rect x="490" y="660" width="10" height="7" fill="#fa8c96"/><rect x="490" y="667" width="10" height="7" fill="#faaa64"/><rect x="490" y="674" width="10" height="7" fill="#fad7b4"/><rect x="490" y="681" width="10" height="7" fill="#fadc14"/><rect x="490" y="688" width="10" height="7" fill="#f0b428"/><rect x="490" y="695" width="10" height="7" fill="#d7963c"/><rect x="490" y="702" width="10" height="7" fill="#c8c8c8"/><rect x="490" y="709" width="10" height="7" fill="#00784b"/><rect x="490" y="716" width="10" height="7" fill="#00e69b"/><rect x="490" y="723" width="10" height="7" fill="#00b4e6"/><rect x="490" y="730" width="10" height="7" fill="#0a6ee6"/><rect x="490" y="737" width="10" height="7" fill="#1e32dc"/><rect x="490" y="744" width="10" height="7" fill="#5a1ee6"/><rect x="490" y="751" width="10" height="7" fill="#7314f0"/><rect x="490" y="758" width="10" height="7" fill="#8c0af0"/><rect x="488" y="794" width="84" height="1" fill="#8c8c8c"/><rect x="488" y="818" width="84" height="1" fill="#8c8c8c"/></g><rect x="10.5" y="821.5" width="45" height="47" fill="#191970" stroke="#a8a8a8" stroke-width="1"/><g transform="translate(10,821)" fill="none" stroke="#ffff00"><path d="M7,12.5 C10,8.5 14,7 18,7.5 C22,8 25,10.5 29,11.2 C33,12 36,10.5 38,9" stroke-width="1.6"/><path d="M37.5,9.5 C30,17 18,28 7,40" stroke-width="2.3"/><path d="M6.5,40 C9,37.5 13,36.5 17,37 C21,37.5 25,39.5 29,40.2 C33,41 36,38.5 39,35" stroke-width="1.6"/></g><rect x="57.5" y="821.5" width="45" height="47" fill="#6e6e6e" stroke="#a8a8a8" stroke-width="1"/><g transform="translate(57,821)" fill="none" stroke="#dcdcdc"><g fill="#dcdcdc" stroke="none" shape-rendering="crispEdges"><rect x="3" y="4" width="7" height="2"/><rect x="3" y="4" width="2" height="11"/><rect x="3" y="13" width="7" height="2"/><rect x="8" y="9" width="2" height="6"/><rect x="6" y="9" width="4" height="2"/><rect x="11" y="4" width="6" height="2"/><rect x="11" y="4" width="2" height="11"/><rect x="11" y="13" width="6" height="2"/><rect x="15" y="4" width="2" height="11"/><rect x="18" y="4" width="6" height="2"/><rect x="18" y="4" width="2" height="11"/><rect x="18" y="8.5" width="5" height="2"/><rect x="18" y="13" width="6" height="2"/><rect x="26" y="4" width="7" height="2"/><rect x="26" y="4" width="2" height="6"/><rect x="26" y="8.5" width="7" height="2"/><rect x="31" y="8.5" width="2" height="6.5"/><rect x="26" y="13" width="7" height="2"/></g><path d="M3,17 L10,17 C18,20 23,30 24,44 L3,44 Z" fill="url(#dpdcdcdc)" stroke="none"/><path d="M14,22 C19,25 22,30 23,36 L17,33 Z" fill="#dcdcdc" stroke="none"/><rect x="4" y="36" width="8" height="8" fill="#dcdcdc" stroke="none"/><path d="M24,27 L37,22 M24,33 L37,23" stroke-width="1" stroke-dasharray="1 2"/><path d="M37,19 L40,22 L37,25 L34,22 Z" fill="#dcdcdc" stroke="none"/><text x="27" y="44" font-family="Liberation Sans" font-size="10" fill="#dcdcdc" stroke="none">.IR</text></g><rect x="104.5" y="821.5" width="45" height="47" fill="#191970" stroke="#a8a8a8" stroke-width="1"/><g transform="translate(104,821)" fill="none" stroke="#ffff00"><path d="M6,9 C8,17 14,26 27,31" stroke-width="2"/><rect x="13.5" y="21.5" width="4" height="4" stroke-width="1"/><path d="M12,25 L15,25 L16,31 L11,31 Z" fill="#ffff00" stroke="none"/><rect x="9" y="31" width="8" height="9" fill="#ffff00" stroke="none"/><text x="33" y="17" font-family="Liberation Sans" font-size="13" fill="#ffff00" stroke="none" textLength="7" lengthAdjust="spacingAndGlyphs">S</text><text x="33" y="28.5" font-family="Liberation Sans" font-size="13" fill="#ffff00" stroke="none" textLength="7" lengthAdjust="spacingAndGlyphs">U</text><text x="33" y="40" font-family="Liberation Sans" font-size="13" fill="#ffff00" stroke="none" textLength="7" lengthAdjust="spacingAndGlyphs">R</text></g><rect x="151.5" y="821.5" width="45" height="47" fill="#191970" stroke="#a8a8a8" stroke-width="1"/><g transform="translate(151,821)" fill="none" stroke="#ffff00"><g stroke-width="1.5"><line x1="5.5" y1="5" x2="5.5" y2="42.5"/><line x1="5" y1="5.5" x2="41" y2="5.5"/><line x1="14.3" y1="5" x2="14.3" y2="42.5"/><line x1="5" y1="14.7" x2="41" y2="14.7"/><line x1="23.1" y1="5" x2="23.1" y2="42.5"/><line x1="5" y1="23.9" x2="41" y2="23.9"/><line x1="31.900000000000002" y1="5" x2="31.900000000000002" y2="42.5"/><line x1="5" y1="33.099999999999994" x2="41" y2="33.099999999999994"/><line x1="40.7" y1="5" x2="40.7" y2="42.5"/><line x1="5" y1="42.3" x2="41" y2="42.3"/></g><path d="M13,9 C16,18 22,27 34,31" stroke-width="2"/><path d="M17,31 L21,31 L22,40 L16,40 Z" fill="#ffff00" stroke="none"/></g><rect x="198.5" y="821.5" width="13" height="47" fill="#191970" stroke="#a8a8a8" stroke-width="1"/><g transform="translate(198,821)" fill="none" stroke="#ffff00"><text x="7.0" y="11.0" text-anchor="middle" font-family="Liberation Sans" font-size="7" fill="#ffff00" stroke="none">B</text><text x="7.0" y="17.2" text-anchor="middle" font-family="Liberation Sans" font-size="7" fill="#ffff00" stroke="none">O</text><text x="7.0" y="23.4" text-anchor="middle" font-family="Liberation Sans" font-size="7" fill="#ffff00" stroke="none">U</text><text x="7.0" y="29.6" text-anchor="middle" font-family="Liberation Sans" font-size="7" fill="#ffff00" stroke="none">N</text><text x="7.0" y="35.8" text-anchor="middle" font-family="Liberation Sans" font-size="7" fill="#ffff00" stroke="none">D</text><text x="7.0" y="42.0" text-anchor="middle" font-family="Liberation Sans" font-size="7" fill="#ffff00" stroke="none">S</text></g><rect x="213.5" y="845.5" width="21" height="23" fill="#191970" stroke="#a8a8a8" stroke-width="1"/><g transform="translate(213,845)" fill="none" stroke="#ffff00"><g stroke-width="1.5"><line x1="3.75" y1="3.75" x2="3.75" y2="20.25"/><line x1="3" y1="4.5" x2="20" y2="4.5"/><line x1="9.05" y1="3.75" x2="9.05" y2="20.25"/><line x1="3" y1="9.7" x2="20" y2="9.7"/><line x1="14.35" y1="3.75" x2="14.35" y2="20.25"/><line x1="3" y1="14.9" x2="20" y2="14.9"/><line x1="19.65" y1="3.75" x2="19.65" y2="20.25"/><line x1="3" y1="20.1" x2="20" y2="20.1"/></g></g><rect x="236.5" y="821.5" width="20" height="47" fill="#191970" stroke="#a8a8a8" stroke-width="1"/><g transform="translate(236,821)" fill="none" stroke="#ffff00"><path d="M2.8,4.5 L7.7,5 L4.5,8 L3.5,11 Z M9,4.5 L12,4 L13,6 L15,7 L14,9 L16.5,11 L15,13 L14,14.6 L13,11 L11,8 Z M16,4 L18,3.8 L17,6 Z M3,12.5 L5,12 L6,14.5 Z" fill="#ffff00" stroke="none"/><text x="10.5" y="25" text-anchor="middle" font-family="Liberation Sans" font-size="9.5" fill="#ffff00" stroke="none" textLength="6.5" lengthAdjust="spacingAndGlyphs">M</text><text x="10.5" y="33" text-anchor="middle" font-family="Liberation Sans" font-size="9.5" fill="#ffff00" stroke="none" textLength="6.5" lengthAdjust="spacingAndGlyphs">A</text><text x="10.5" y="41" text-anchor="middle" font-family="Liberation Sans" font-size="9.5" fill="#ffff00" stroke="none" textLength="6.5" lengthAdjust="spacingAndGlyphs">P</text></g><rect x="258.5" y="821.5" width="20" height="47" fill="#191970" stroke="#a8a8a8" stroke-width="1"/><g transform="translate(258,821)" fill="none" stroke="#ffff00"><circle cx="10.6" cy="23.4" r="6.8" stroke-width="1.3"/><circle cx="10.6" cy="23.4" r="2.6" stroke-width="1.3"/><path d="M13.20,23.40 L17.40,23.40 M12.44,25.24 L15.41,28.21 M10.60,26.00 L10.60,30.20 M8.76,25.24 L5.79,28.21 M8.00,23.40 L3.80,23.40 M8.76,21.56 L5.79,18.59 M10.60,20.80 L10.60,16.60 M12.44,21.56 L15.41,18.59" stroke-width="1.2"/><path d="M10.6,14.399999999999999 L10.6,32.4 M4.6,16.4 L16.6,16.4 M4.6,30.4 L16.6,30.4 M3.0999999999999996,17.4 L3.0999999999999996,19.4 M18.1,17.4 L18.1,19.4 M3.0999999999999996,27.4 L3.0999999999999996,29.4 M18.1,27.4 L18.1,29.4" stroke-width="1.3"/></g><rect x="280.5" y="845.5" width="21" height="23" fill="#191970" stroke="#a8a8a8" stroke-width="1"/><g transform="translate(280,845)" fill="none" stroke="#ffff00"><circle cx="10.7" cy="11.4" r="7.4" stroke-width="1.2"/></g><rect x="303.5" y="821.5" width="45" height="47" fill="#191970" stroke="#a8a8a8" stroke-width="1"/><g transform="translate(303,821)" fill="none" stroke="#ffff00"><path d="M6,32 L40,32 L37,39 M6,32 L6,36 L9,39" stroke-width="1.2"/><path d="M9,32 L9,24.5 L13,24.5 L15,32" stroke-width="1.2"/><circle cx="22.5" cy="23.5" r="3.2" stroke-width="1.2"/><path d="M21.5,27 L21.5,32 M23.5,27 L23.5,32" stroke-width="1"/><path d="M34.5,16 L34.5,32" stroke-width="1.2"/><path d="M3,39 L5,38 L7,39.5 L10,38 L13,39.5 L16,38 L19,39.5 L22,38 L25,39.5 L28,38 L31,39.5 L34,38 L37,39.5 L40,38 L43,37.5 L43,43.5 L3,43.5 Z" fill="#ffff00" stroke="none"/></g></svg>
<div class="t" style="left:16.5px;top:427px;font-size:25px;color:#ffff00;font-family:'Liberation Sans';transform:scaleX(0.9379);">1−aug−1997,01:05:00</div>
<div class="t" style="left:260.5px;top:427px;font-size:25px;color:#fff;font-family:'Liberation Sans';transform:scaleX(0.9465);">maxdz plot.</div>
<div class="t" style="left:396.3px;top:427px;font-size:25px;color:#fff;font-family:'Liberation Sans';transform:scaleX(0.9386);">maxdz plot.</div>
<div class="t" style="left:16.5px;top:459px;font-size:25px;color:#fff;font-family:'Liberation Sans';transform:scaleX(0.9576);">rhb_met track.</div>
<div class="t" style="left:490.7px;top:456.7px;font-size:17px;color:#fff;font-family:'Liberation Sans';transform:scaleX(1.0284);">maxdz</div>
<div class="t" style="left:505.7px;top:478.5px;font-size:17px;color:#fff;font-family:'Liberation Sans';transform:scaleX(1.0062);">65.0</div>
<div class="t" style="left:505.7px;top:506.5px;font-size:17px;color:#fff;font-family:'Liberation Sans';transform:scaleX(1.0062);">45.0</div>
<div class="t" style="left:505.7px;top:534.5px;font-size:17px;color:#fff;font-family:'Liberation Sans';transform:scaleX(1.0062);">25.0</div>
<div class="t" style="left:505.7px;top:562.5px;font-size:17px;color:#fff;font-family:'Liberation Sans';transform:scaleX(1.0364);">5.0</div>
<div class="t" style="left:506.2px;top:590.5px;font-size:17px;color:#fff;font-family:'Liberation Sans';transform:scaleX(1.0229);">−15.0</div>
<div class="t" style="left:490.7px;top:624.7px;font-size:17px;color:#fff;font-family:'Liberation Sans';transform:scaleX(1.0284);">maxdz</div>
<div class="t" style="left:505.7px;top:646.5px;font-size:17px;color:#fff;font-family:'Liberation Sans';transform:scaleX(1.0062);">65.0</div>
<div class="t" style="left:505.7px;top:674.5px;font-size:17px;color:#fff;font-family:'Liberation Sans';transform:scaleX(1.0062);">45.0</div>
<div class="t" style="left:505.7px;top:702.5px;font-size:17px;color:#fff;font-family:'Liberation Sans';transform:scaleX(1.0062);">25.0</div>
<div class="t" style="left:505.7px;top:730.5px;font-size:17px;color:#fff;font-family:'Liberation Sans';transform:scaleX(1.0364);">5.0</div>
<div class="t" style="left:506.2px;top:758.5px;font-size:17px;color:#fff;font-family:'Liberation Sans';transform:scaleX(1.0229);">−15.0</div>
<div class="t" style="left:489.5px;top:799.5px;font-size:11px;color:#ff0000;font-family:'Liberation Sans';transform:scaleX(0.9168);">rhb_met</div>
<div class="t" style="left:380.7px;top:839.2px;font-size:25px;color:#fff;font-family:'Liberation Sans';transform:scaleX(0.9508);">Alt: 0.50 km MSL</div>
<div class="a" style="left:573px;top:796px;width:502px;height:2px;background:#f0f0f0;"></div>
<div class="a" style="left:1073px;top:796px;width:2px;height:82px;background:#f0f0f0;"></div>
<div class="a" style="left:435px;top:876px;width:640px;height:2px;background:#f0f0f0;"></div>
<div class="a" style="left:435px;top:870px;width:2px;height:8px;background:#f0f0f0;"></div>
<div class="a" style="left:576px;top:771px;width:42px;height:20px;border:2px solid #e8e8e8"></div>
<div class="t" style="left:581.7px;top:778px;font-size:12.5px;color:#e8e8e8;font-family:'Liberation Sans';transform:scaleX(0.7657);">Dismiss</div>
<div class="t" style="left:575px;top:802px;font-size:15px;color:#f0f0f0;font-family:'Liberation Mono';transform:scaleX(0.9998);">PLATFORM</div>
<div class="t" style="left:674px;top:802px;font-size:15px;color:#f0f0f0;font-family:'Liberation Mono';transform:scaleX(0.9997);">FIELD</div>
<div class="t" style="left:773px;top:802px;font-size:15px;color:#f0f0f0;font-family:'Liberation Mono';transform:scaleX(0.9998);">ALTITUDE</div>
<div class="t" style="left:908px;top:802px;font-size:15px;color:#f0f0f0;font-family:'Liberation Mono';transform:scaleX(0.9996);">TIME</div>
<div class="t" style="left:575px;top:817px;font-size:15px;color:#f0f0f0;font-family:'Liberation Mono';transform:scaleX(0.9998);">rhb_lowprf</div>
<div class="t" style="left:674px;top:817px;font-size:15px;color:#f0f0f0;font-family:'Liberation Mono';transform:scaleX(0.9997);">maxdz</div>
<div class="t" style="left:773px;top:817px;font-size:15px;color:#f0f0f0;font-family:'Liberation Mono';transform:scaleX(0.9997);">0.50 km MSL</div>
<div class="t" style="left:908px;top:817px;font-size:15px;color:#f0f0f0;font-family:'Liberation Mono';transform:scaleX(0.9998);">1-Aug-97,1:00:12</div>
<div class="t" style="left:575px;top:832px;font-size:15px;color:#f0f0f0;font-family:'Liberation Mono';transform:scaleX(0.9997);">rhb_3d</div>
<div class="t" style="left:674px;top:832px;font-size:15px;color:#f0f0f0;font-family:'Liberation Mono';transform:scaleX(0.9997);">maxdz</div>
<div class="t" style="left:773px;top:832px;font-size:15px;color:#f0f0f0;font-family:'Liberation Mono';transform:scaleX(0.9997);">0.50 km MSL</div>
<div class="t" style="left:908px;top:832px;font-size:15px;color:#f0f0f0;font-family:'Liberation Mono';transform:scaleX(0.9998);">1-Aug-97,1:01:12</div>
<div class="t" style="left:575px;top:847px;font-size:15px;color:#f0f0f0;font-family:'Liberation Mono';transform:scaleX(0.9998);">rhb_met</div>
<div class="t" style="left:773px;top:847px;font-size:15px;color:#f0f0f0;font-family:'Liberation Mono';transform:scaleX(0.9998);">1-Aug-97,1:04:54</div>
<div class="t" style="left:20px;top:870px;font-size:15px;color:#000;font-family:'Liberation Mono';transform:scaleX(0.9972);">rain:beaufait:66&gt;xdump.all 970801.0105.xwd</div>
</body></html>
